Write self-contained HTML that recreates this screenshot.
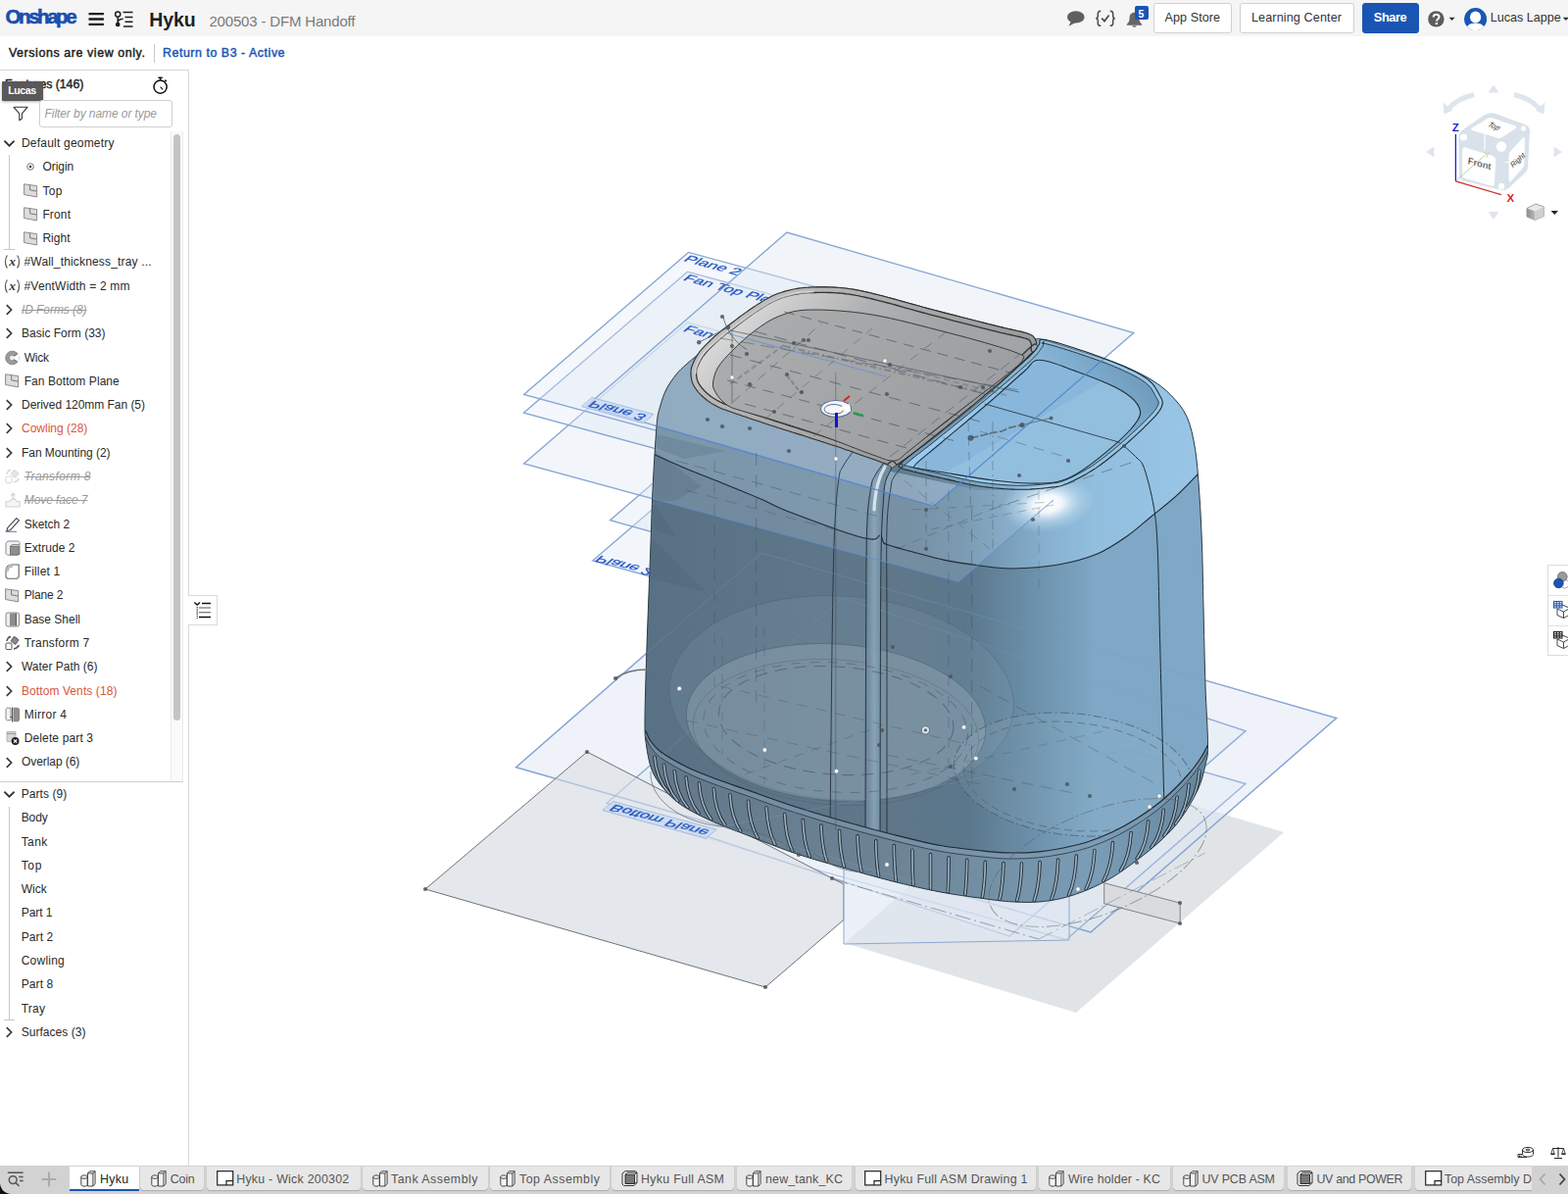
<!DOCTYPE html>
<html lang="en"><head><meta charset="utf-8"><title>Hyku | Onshape</title>
<style>
html,body{margin:0;padding:0;}
body{width:1600px;height:1218px;position:relative;overflow:hidden;background:#fff;font-family:"Liberation Sans",sans-serif;}
.t{position:absolute;line-height:20px;height:20px;white-space:nowrap;}
.abs{position:absolute;}
#hdr{position:absolute;left:0;top:0;width:1600px;height:37px;background:#f5f5f5;}
#sub{position:absolute;left:0;top:37px;width:1600px;height:34px;background:#fff;}
#panel{position:absolute;left:0;top:71px;width:192px;height:1118px;background:#fff;border-top:1px solid #d4d4d4;border-right:1px solid #d9d9d9;box-sizing:content-box;}
#tabs{position:absolute;left:0;top:1189px;width:1600px;height:29px;background:#d2d2d2;}
.btn{position:absolute;top:3px;height:31px;box-sizing:border-box;border:1px solid #d0d0d0;border-radius:3px;background:#fff;}
.tab{position:absolute;top:1190px;height:24px;background:#e7e7e7;border-radius:0 0 4px 4px;box-shadow:0 1px 1px rgba(0,0,0,0.18);}
.tab.act{background:#fff;border-radius:0;box-shadow:none;border-bottom:2px solid #1b55b3;height:23px;}
svg{position:absolute;overflow:visible;}
</style></head><body>
<div id="canvas" class="abs" style="left:193px;top:71px;width:1407px;height:1118px;background:#fff;"></div>
<svg id="model" style="left:0;top:0" width="1600" height="1218" viewBox="0 0 1600 1218">
<defs>
<linearGradient id="gbody" gradientUnits="userSpaceOnUse" x1="658" y1="0" x2="1232" y2="0">
<stop offset="0" stop-color="#587184"/><stop offset="0.3" stop-color="#5d7688"/><stop offset="0.45" stop-color="#5f7789"/>
<stop offset="0.57" stop-color="#5a778b"/><stop offset="0.68" stop-color="#6a8ea8"/><stop offset="0.80" stop-color="#7ea8c6"/><stop offset="1" stop-color="#7fa8c6"/>
</linearGradient>
<radialGradient id="ghi" gradientUnits="userSpaceOnUse" cx="0" cy="0" r="48">
<stop offset="0" stop-color="#fff" stop-opacity="1"/><stop offset="0.3" stop-color="#fff" stop-opacity="0.9"/><stop offset="0.65" stop-color="#d8ecfa" stop-opacity="0.4"/><stop offset="1" stop-color="#bfe0f5" stop-opacity="0"/>
</radialGradient>
<linearGradient id="glid" gradientUnits="userSpaceOnUse" x1="740" y1="300" x2="960" y2="480">
<stop offset="0" stop-color="#acaeb0"/><stop offset="0.5" stop-color="#a4a6a8"/><stop offset="1" stop-color="#9c9ea1"/>
</linearGradient>
<linearGradient id="grim" gradientUnits="userSpaceOnUse" x1="700" y1="300" x2="900" y2="480">
<stop offset="0" stop-color="#c9c9c9"/><stop offset="0.4" stop-color="#b4b4b4"/><stop offset="1" stop-color="#9a9c9e"/>
</linearGradient>
<linearGradient id="gbowl" gradientUnits="userSpaceOnUse" x1="730" y1="310" x2="860" y2="440">
<stop offset="0" stop-color="#e6e6e6"/><stop offset="0.25" stop-color="#cfcfcf"/><stop offset="0.6" stop-color="#b0b1b2"/><stop offset="1" stop-color="#a2a4a6"/>
</linearGradient>
<linearGradient id="gtbowl" gradientUnits="userSpaceOnUse" x1="1170" y1="380" x2="1030" y2="490">
<stop offset="0" stop-color="#6e98b8"/><stop offset="0.3" stop-color="#7fadcf"/><stop offset="0.7" stop-color="#93c4e6"/><stop offset="1" stop-color="#9acbee"/>
</linearGradient>
<linearGradient id="gchan" gradientUnits="userSpaceOnUse" x1="884" y1="0" x2="900" y2="0">
<stop offset="0" stop-color="#6a8498"/><stop offset="0.5" stop-color="#8aa5b8"/><stop offset="1" stop-color="#6f8a9e"/>
</linearGradient>
<linearGradient id="gbase" gradientUnits="userSpaceOnUse" x1="658" y1="0" x2="1232" y2="0">
<stop offset="0" stop-color="#62788a"/><stop offset="0.45" stop-color="#6d8495"/><stop offset="0.8" stop-color="#7a9db6"/><stop offset="1" stop-color="#64849b"/>
</linearGradient>
<linearGradient id="gfil" gradientUnits="userSpaceOnUse" x1="930" y1="0" x2="1230" y2="0">
<stop offset="0" stop-color="#a9d8fa" stop-opacity="0.05"/><stop offset="0.45" stop-color="#a9d8fa" stop-opacity="0.40"/><stop offset="1" stop-color="#a9d8fa" stop-opacity="0.62"/>
</linearGradient>
<clipPath id="clid"><path d="M705.0 380.0C705.0 376.2 705.8 373.8 707.5 370.0C709.2 366.2 711.2 362.1 715.0 357.5C718.8 352.9 724.6 347.3 730.0 342.5C735.4 337.7 740.8 333.8 747.5 328.8C754.2 323.8 762.9 317.1 770.0 312.5C777.1 307.9 783.3 303.9 790.0 301.0C796.7 298.1 803.3 296.3 810.0 295.0C816.7 293.7 821.3 293.2 830.0 293.0C838.7 292.8 851.2 292.8 862.0 294.0C872.8 295.2 880.0 296.8 895.0 300.5C910.0 304.2 931.4 310.6 952.0 316.0C972.6 321.4 1002.6 329.0 1018.6 333.0C1034.6 337.0 1041.8 337.9 1048.0 340.0C1054.2 342.1 1054.4 342.9 1056.0 345.5C1057.6 348.1 1058.4 352.8 1057.7 355.4C1057.0 358.0 1060.4 353.1 1052.0 361.0C1043.6 368.9 1024.2 388.4 1007.5 402.8C990.8 417.2 967.5 435.4 951.7 447.5C935.9 459.6 920.4 471.1 912.6 475.4C904.8 479.7 915.0 476.9 905.0 473.5C895.0 470.1 871.7 461.4 852.5 455.0C833.3 448.6 806.7 440.4 790.0 435.0C773.3 429.6 762.1 425.8 752.5 422.5C742.9 419.2 738.3 417.9 732.5 415.0C726.7 412.1 721.7 408.8 717.5 405.0C713.3 401.2 709.6 396.7 707.5 392.5C705.4 388.3 705.0 383.8 705.0 380.0Z"/></clipPath>
<clipPath id="cfront"><path d="M640 300L905 300L905 480L1000 500L1075 500L1075 700L640 700Z"/></clipPath>
<clipPath id="cbody"><path d="M760.0 324.0C765.8 319.2 772.9 311.9 780.0 307.5C787.1 303.1 794.2 299.9 802.5 297.5C810.8 295.1 820.1 293.6 830.0 293.0C839.9 292.4 851.2 292.8 862.0 294.0C872.8 295.2 880.0 296.8 895.0 300.5C910.0 304.2 931.4 310.6 952.0 316.0C972.6 321.4 1002.6 329.0 1018.6 333.0C1034.6 337.0 1041.8 337.9 1048.0 340.0C1054.2 342.1 1053.0 344.3 1056.0 345.5C1059.0 346.7 1055.5 344.0 1066.0 347.0C1076.5 350.0 1105.5 359.3 1119.0 363.7C1132.5 368.1 1137.7 369.5 1147.0 373.5C1156.3 377.5 1167.1 382.6 1175.0 387.5C1182.9 392.4 1188.5 396.6 1194.5 402.8C1200.5 409.1 1206.8 415.7 1211.0 425.0C1215.2 434.3 1217.5 445.6 1219.6 458.6C1221.7 471.7 1222.6 486.6 1223.8 503.3C1225.0 520.0 1225.9 539.5 1226.6 559.0C1227.3 578.5 1227.4 596.5 1228.0 620.0C1228.6 643.5 1229.2 676.7 1230.0 700.0C1230.8 723.3 1232.5 746.7 1232.5 760.0C1232.5 773.3 1231.7 772.5 1230.0 780.0C1228.3 787.5 1226.7 795.8 1222.5 805.0C1218.3 814.2 1211.2 826.3 1205.0 835.0C1198.8 843.7 1192.5 849.9 1185.0 857.0C1177.5 864.1 1168.3 871.2 1160.0 877.5C1151.7 883.8 1143.3 890.0 1135.0 895.0C1126.7 900.0 1118.3 904.0 1110.0 907.5C1101.7 911.0 1093.3 913.9 1085.0 916.0C1076.7 918.1 1068.3 919.3 1060.0 920.0C1051.7 920.7 1043.3 920.4 1035.0 920.0C1026.7 919.6 1022.5 919.2 1010.0 917.5C997.5 915.8 976.7 913.1 960.0 910.0C943.3 906.9 926.7 902.9 910.0 898.8C893.3 894.6 876.7 889.8 860.0 885.0C843.3 880.2 826.7 875.7 810.0 870.0C793.3 864.3 774.2 856.5 760.0 851.0C745.8 845.5 735.8 842.0 725.0 837.0C714.2 832.0 703.2 826.7 695.0 821.0C686.8 815.3 681.0 809.0 676.0 803.0C671.0 797.0 667.8 792.2 665.0 785.0C662.2 777.8 660.7 768.3 659.5 760.0C658.3 751.7 657.9 751.7 658.0 735.0C658.1 718.3 659.0 689.2 660.0 660.0C661.0 630.8 662.8 586.7 663.8 560.0C664.8 533.3 665.0 520.8 666.0 500.0C667.0 479.2 668.8 449.2 670.0 435.0C671.2 420.8 671.8 421.3 673.5 415.0C675.2 408.7 677.2 402.5 680.0 397.0C682.8 391.5 686.7 386.2 690.0 382.0C693.3 377.8 696.3 375.3 700.0 372.0C703.7 368.7 707.8 365.2 712.0 362.0C716.2 358.8 719.5 356.8 725.0 352.5C730.5 348.2 739.2 340.8 745.0 336.0C750.8 331.2 754.2 328.8 760.0 324.0Z"/></clipPath>
</defs>
<path d="M862.0 962.0 L1098.0 1033.0 L1310.0 849.0 L1074.0 778.0Z" fill="#e1e4e7"/>
<path d="M526.5 782.7 L777.0 564.0 L1363.7 732.5 L1113.0 951.0Z" fill="#dfe8f4" fill-opacity="0.5" stroke="#86a6d4" stroke-opacity="1" stroke-width="1.35"/>
<path d="M700.0 850.0 L1150.0 765.0 L1271.0 799.5 L1088.0 958.5Z" fill="#dfe8f4" fill-opacity="0.35" stroke="#86a6d4" stroke-opacity="0.8" stroke-width="1.35"/>
<path d="M619.0 819.4 L860.0 610.0 L1271.0 745.7 L1030.0 955.1Z" fill="#dfe8f4" fill-opacity="0.35" stroke="#86a6d4" stroke-opacity="0.8" stroke-width="1.35"/>
<path d="M434.0 907.0 L599.0 767.0 L861.0 902.0 L861.0 938.2 L781.0 1007.0Z" fill="#e2e5e9" fill-opacity="0.92" stroke="#6e7378" stroke-width="1"/>
<path d="M526.5 782.7 L777.0 564.0 L1363.7 732.5 L1113.0 951.0Z" fill="none" stroke="#86a6d4" stroke-opacity="0.55" stroke-width="1.2"/>
<path d="M619.0 819.4 L860.0 610.0 L1271.0 745.7 L1030.0 955.1Z" fill="none" stroke="#86a6d4" stroke-opacity="0.45" stroke-width="1.2"/>
<path d="M861.0 874.0 L1091.0 874.0 L1091.0 959.0 L861.0 963.0Z" fill="#dfe8f4" fill-opacity="0.6" stroke="#8fa8cc" stroke-width="1"/>
<path d="M1126.7 900.7 L1204.2 921.2 L1204.2 942.0 L1126.7 921.7Z" fill="#d9dbde" stroke="#777" stroke-width="0.9"/>
<path d="M604.7 572.0 L770.0 430.0 L1150.3 534.0 L985.0 676.0Z" fill="#dfe8f4" fill-opacity="0.4" stroke="#86a6d4" stroke-opacity="1" stroke-width="1.35"/>
<path d="M622.5 530.7 L760.0 412.0 L1122.5 513.3 L985.0 632.0Z" fill="#dfe8f4" fill-opacity="0.4" stroke="#86a6d4" stroke-opacity="1" stroke-width="1.35"/>
<path d="M534.5 473.0 L701.5 329.0 L1145.0 449.5 L978.0 593.5Z" fill="#dfe8f4" fill-opacity="0.4" stroke="#86a6d4" stroke-opacity="1" stroke-width="1.35"/>
<path d="M534.5 421.1 L701.5 277.2 L1145.0 397.8 L978.0 541.7Z" fill="#dfe8f4" fill-opacity="0.35" stroke="#86a6d4" stroke-opacity="1" stroke-width="1.35"/>
<path d="M534.5 402.5 L702.5 257.4 L1146.0 377.9 L978.0 523.0Z" fill="#dfe8f4" fill-opacity="0.35" stroke="#86a6d4" stroke-opacity="1" stroke-width="1.35"/>
<path d="M598.8 414.0 L802.9 237.1 L1156.8 339.5 L952.7 516.4Z" fill="#dfe8f4" fill-opacity="0.45" stroke="#86a6d4" stroke-opacity="1" stroke-width="1.35"/>
<g transform="matrix(1.256 0.341 -0.757 0.653 696.5 266.0)"><text x="0" y="0" font-family="Liberation Sans,sans-serif" font-size="13" fill="#2457c5" stroke="#2457c5" stroke-width="0.25">Plane 2</text></g>
<g transform="matrix(1.256 0.341 -0.757 0.653 696.0 285.5)"><text x="0" y="0" font-family="Liberation Sans,sans-serif" font-size="13" fill="#2457c5" stroke="#2457c5" stroke-width="0.25">Fan Top Plane</text></g>
<g transform="matrix(1.256 0.341 -0.757 0.653 696.0 337.5)"><text x="0" y="0" font-family="Liberation Sans,sans-serif" font-size="13" fill="#2457c5" stroke="#2457c5" stroke-width="0.25">Fan Bottom Plane</text></g>
<g transform="matrix(1.256 0.341 0.757 -0.653 605.5 408.5)"><rect x="-3" y="-11" width="50.1" height="14" fill="#c9d9f2" fill-opacity="0.75" stroke="#8fb0e0" stroke-width="0.6"/><text x="0" y="0" font-family="Liberation Sans,sans-serif" font-size="13" fill="#2457c5" stroke="#2457c5" stroke-width="0.25">Plane 3</text></g>
<g transform="matrix(1.256 0.341 0.757 -0.653 612.5 566.5)"><text x="0" y="0" font-family="Liberation Sans,sans-serif" font-size="13" fill="#2457c5" stroke="#2457c5" stroke-width="0.25">Plane 2</text></g>
<g transform="matrix(1.256 0.341 0.757 -0.653 627.0 820.5)"><rect x="-3" y="-11" width="84.0" height="14" fill="#c9d9f2" fill-opacity="0.75" stroke="#8fb0e0" stroke-width="0.6"/><text x="0" y="0" font-family="Liberation Sans,sans-serif" font-size="13" fill="#2457c5" stroke="#2457c5" stroke-width="0.25">Bottom Plane</text></g>
<path d="M760.0 324.0C765.8 319.2 772.9 311.9 780.0 307.5C787.1 303.1 794.2 299.9 802.5 297.5C810.8 295.1 820.1 293.6 830.0 293.0C839.9 292.4 851.2 292.8 862.0 294.0C872.8 295.2 880.0 296.8 895.0 300.5C910.0 304.2 931.4 310.6 952.0 316.0C972.6 321.4 1002.6 329.0 1018.6 333.0C1034.6 337.0 1041.8 337.9 1048.0 340.0C1054.2 342.1 1053.0 344.3 1056.0 345.5C1059.0 346.7 1055.5 344.0 1066.0 347.0C1076.5 350.0 1105.5 359.3 1119.0 363.7C1132.5 368.1 1137.7 369.5 1147.0 373.5C1156.3 377.5 1167.1 382.6 1175.0 387.5C1182.9 392.4 1188.5 396.6 1194.5 402.8C1200.5 409.1 1206.8 415.7 1211.0 425.0C1215.2 434.3 1217.5 445.6 1219.6 458.6C1221.7 471.7 1222.6 486.6 1223.8 503.3C1225.0 520.0 1225.9 539.5 1226.6 559.0C1227.3 578.5 1227.4 596.5 1228.0 620.0C1228.6 643.5 1229.2 676.7 1230.0 700.0C1230.8 723.3 1232.5 746.7 1232.5 760.0C1232.5 773.3 1231.7 772.5 1230.0 780.0C1228.3 787.5 1226.7 795.8 1222.5 805.0C1218.3 814.2 1211.2 826.3 1205.0 835.0C1198.8 843.7 1192.5 849.9 1185.0 857.0C1177.5 864.1 1168.3 871.2 1160.0 877.5C1151.7 883.8 1143.3 890.0 1135.0 895.0C1126.7 900.0 1118.3 904.0 1110.0 907.5C1101.7 911.0 1093.3 913.9 1085.0 916.0C1076.7 918.1 1068.3 919.3 1060.0 920.0C1051.7 920.7 1043.3 920.4 1035.0 920.0C1026.7 919.6 1022.5 919.2 1010.0 917.5C997.5 915.8 976.7 913.1 960.0 910.0C943.3 906.9 926.7 902.9 910.0 898.8C893.3 894.6 876.7 889.8 860.0 885.0C843.3 880.2 826.7 875.7 810.0 870.0C793.3 864.3 774.2 856.5 760.0 851.0C745.8 845.5 735.8 842.0 725.0 837.0C714.2 832.0 703.2 826.7 695.0 821.0C686.8 815.3 681.0 809.0 676.0 803.0C671.0 797.0 667.8 792.2 665.0 785.0C662.2 777.8 660.7 768.3 659.5 760.0C658.3 751.7 657.9 751.7 658.0 735.0C658.1 718.3 659.0 689.2 660.0 660.0C661.0 630.8 662.8 586.7 663.8 560.0C664.8 533.3 665.0 520.8 666.0 500.0C667.0 479.2 668.8 449.2 670.0 435.0C671.2 420.8 671.8 421.3 673.5 415.0C675.2 408.7 677.2 402.5 680.0 397.0C682.8 391.5 686.7 386.2 690.0 382.0C693.3 377.8 696.3 375.3 700.0 372.0C703.7 368.7 707.8 365.2 712.0 362.0C716.2 358.8 719.5 356.8 725.0 352.5C730.5 348.2 739.2 340.8 745.0 336.0C750.8 331.2 754.2 328.8 760.0 324.0Z" fill="url(#gbody)"/>
<g clip-path="url(#cbody)">
<path d="M534.5 473.0 L701.5 329.0 L1145.0 449.5 L978.0 593.5Z" fill="#cfe6ff" fill-opacity="0.2" clip-path="url(#cfront)"/>
<path d="M598.8 414.0 L802.9 237.1 L1156.8 339.5 L952.7 516.4Z" fill="#cfe6ff" fill-opacity="0.27" clip-path="url(#cfront)"/>
<path d="M664.0 462.0C670.0 464.7 687.3 472.7 700.0 478.0C712.7 483.3 727.0 488.7 740.0 494.0C753.0 499.3 768.0 505.4 778.0 509.7C788.0 514.0 788.1 515.2 800.0 520.0C811.9 524.8 837.0 534.0 849.3 538.5C861.6 543.0 867.3 544.8 873.9 546.7C880.5 548.6 885.4 549.5 888.7 550.0C892.1 550.5 892.5 550.2 894.0 549.5C895.5 548.8 896.9 546.6 897.5 546.0L905 475L905 300L640 300L640 462Z" fill="#bcd9f0" fill-opacity="0.16"/>
<path d="M899.3 546.0C899.6 547.0 900.0 550.4 901.0 552.0C902.0 553.6 899.9 553.7 905.0 555.5C910.1 557.3 921.6 560.4 931.4 563.0C941.2 565.6 952.6 569.1 964.0 571.4C975.4 573.7 988.3 575.6 1000.0 577.0C1011.7 578.4 1020.7 580.2 1034.0 580.0C1047.3 579.8 1065.7 578.5 1080.0 576.0C1094.3 573.5 1108.0 569.8 1119.7 565.0C1131.4 560.2 1140.8 553.4 1150.0 547.0C1159.2 540.6 1166.5 533.6 1175.0 526.7C1183.5 519.8 1193.0 512.5 1200.8 505.4C1208.6 498.3 1218.5 487.6 1222.0 484.0L1240 484L1240 330L1050 330L905 475Z" fill="url(#gfil)"/>
<g transform="translate(1069,514) rotate(-8) scale(1.0,0.6)"><circle cx="0" cy="0" r="48" fill="url(#ghi)"/></g>
</g>
<g clip-path="url(#cbody)">
<path d="M669.9 443.0 L741.0 460.0 L697.5 468.0 L669.9 456.8Z" fill="#40596c" fill-opacity="0.2"/>
<path d="M668.7 460.0 L715.9 495.9 L688.3 510.8 L667.0 512.0Z" fill="#40596c" fill-opacity="0.2"/>
<path d="M667.0 514.0 L691.7 548.7 L667.0 539.5Z" fill="#40596c" fill-opacity="0.2"/>
<path d="M665.3 548.7 L720.5 604.0 L664.0 590.0Z" fill="#40596c" fill-opacity="0.2"/>
<g transform="rotate(4 858 722)"><ellipse cx="858" cy="712" rx="176" ry="104" fill="#8fa6b8" fill-opacity="0.16" stroke="#4e6272" stroke-opacity="0.5" stroke-width="0.8"/></g>
<g transform="rotate(4 853 737)"><ellipse cx="853" cy="737" rx="153" ry="80" fill="#a9bac6" fill-opacity="0.30" stroke="#4a5d6b" stroke-opacity="0.6" stroke-width="0.9"/></g>
<g transform="rotate(4 853 745)"><ellipse cx="853" cy="747" rx="146" ry="74" fill="none" stroke="#4a5d6b" stroke-opacity="0.45" stroke-width="0.8"/></g>
<g transform="rotate(6 1095 790)"><ellipse cx="1095" cy="790" rx="122" ry="62" fill="#b5cbdc" fill-opacity="0.10" stroke="#46586a" stroke-opacity="0.7" stroke-width="1" stroke-dasharray="9 3 2 3"/></g>
<g transform="rotate(6 1095 790)"><ellipse cx="1095" cy="792" rx="112" ry="55" fill="none" stroke="#46586a" stroke-opacity="0.6" stroke-width="0.9" stroke-dasharray="8 5"/></g>
<path d="M901.8 472.0C900.3 474.2 895.2 480.8 893.0 485.0C890.8 489.2 890.1 488.6 888.7 497.5C887.3 506.4 885.4 514.8 884.6 538.5C883.8 562.2 884.0 586.4 883.7 640.0C883.4 693.6 883.1 823.3 883.0 860.0L898 865L898.5 640.0L899.3 555.0L901.8 505.7L904.0 490.0L911.7 474.5Z" fill="url(#gchan)" fill-opacity="0.9"/>
<path d="M903 476C897 486 893 498 892 520" fill="none" stroke="#e4eef5" stroke-width="3.2" stroke-linecap="round" stroke-opacity="0.85"/>
<path d="M870.6 460.5C868.8 463.1 862.5 471.2 860.0 476.0C857.5 480.8 857.2 478.6 855.8 489.0C854.4 499.4 852.8 513.3 851.7 538.5C850.6 563.7 850.1 588.1 849.3 640.0C848.5 691.9 847.4 815.0 847.0 850.0" fill="none" stroke="#1e2a33" stroke-opacity="0.85" stroke-width="1"/>
<path d="M901.8 472.0C900.3 474.2 895.2 480.8 893.0 485.0C890.8 489.2 890.1 488.6 888.7 497.5C887.3 506.4 885.4 514.8 884.6 538.5C883.8 562.2 884.0 586.4 883.7 640.0C883.4 693.6 883.1 823.3 883.0 860.0" fill="none" stroke="#1e2a33" stroke-opacity="0.9" stroke-width="1"/>
<path d="M911.7 474.5C910.4 477.1 905.6 484.8 904.0 490.0C902.4 495.2 902.6 494.9 901.8 505.7C901.0 516.5 899.8 532.6 899.3 555.0C898.8 577.4 898.7 588.3 898.5 640.0C898.3 691.7 898.1 827.5 898.0 865.0" fill="none" stroke="#1e2a33" stroke-opacity="0.9" stroke-width="1"/>
<path d="M921.5 474.5C919.9 476.6 914.1 483.2 912.0 487.0C909.9 490.8 910.2 488.9 909.0 497.5C907.8 506.1 905.7 514.8 905.0 538.5C904.3 562.2 905.0 585.1 905.0 640.0C905.0 694.9 905.0 830.0 905.0 868.0" fill="none" stroke="#1e2a33" stroke-opacity="0.85" stroke-width="1"/>
<path d="M664.0 462.0C670.0 464.7 687.3 472.7 700.0 478.0C712.7 483.3 727.0 488.7 740.0 494.0C753.0 499.3 768.0 505.4 778.0 509.7C788.0 514.0 788.1 515.2 800.0 520.0C811.9 524.8 837.0 534.0 849.3 538.5C861.6 543.0 867.3 544.8 873.9 546.7C880.5 548.6 885.4 549.5 888.7 550.0C892.1 550.5 892.5 550.2 894.0 549.5C895.5 548.8 896.9 546.6 897.5 546.0" fill="none" stroke="#1e2a33" stroke-width="1.1"/>
<path d="M899.3 546.0C899.6 547.0 900.0 550.4 901.0 552.0C902.0 553.6 899.9 553.7 905.0 555.5C910.1 557.3 921.6 560.4 931.4 563.0C941.2 565.6 952.6 569.1 964.0 571.4C975.4 573.7 988.3 575.6 1000.0 577.0C1011.7 578.4 1020.7 580.2 1034.0 580.0C1047.3 579.8 1065.7 578.5 1080.0 576.0C1094.3 573.5 1108.0 569.8 1119.7 565.0C1131.4 560.2 1140.8 553.4 1150.0 547.0C1159.2 540.6 1166.5 533.6 1175.0 526.7C1183.5 519.8 1193.0 512.5 1200.8 505.4C1208.6 498.3 1218.5 487.6 1222.0 484.0" fill="none" stroke="#1e2a33" stroke-width="1.1"/>
<path d="M1145.8 454.0C1148.2 456.2 1156.4 463.1 1160.0 467.0C1163.6 470.9 1164.6 469.3 1167.5 477.6C1170.4 485.9 1175.0 503.3 1177.3 517.0C1179.6 530.7 1180.1 536.2 1181.2 560.0C1182.3 583.8 1182.7 619.2 1183.8 660.0C1184.8 700.8 1186.8 779.2 1187.5 805.0C1188.2 830.8 1187.9 813.3 1188.0 815.0" fill="none" stroke="#1e2a33" stroke-width="1"/>
</g>
<g clip-path="url(#cbody)">
<path d="M658.5 745.0C659.4 746.8 661.2 752.2 664.0 756.0C666.8 759.8 669.0 763.2 675.0 767.5C681.0 771.8 691.7 777.8 700.0 782.0C708.3 786.2 715.0 788.7 725.0 792.5C735.0 796.3 745.8 800.0 760.0 805.0C774.2 810.0 793.3 817.1 810.0 822.5C826.7 827.9 843.3 832.8 860.0 837.5C876.7 842.2 893.3 846.8 910.0 851.0C926.7 855.2 943.3 859.5 960.0 862.5C976.7 865.5 997.5 867.5 1010.0 868.8C1022.5 870.0 1026.7 870.0 1035.0 870.0C1043.3 870.0 1051.7 869.6 1060.0 868.8C1068.3 867.9 1076.7 866.7 1085.0 865.0C1093.3 863.3 1101.7 861.5 1110.0 858.8C1118.3 856.0 1126.7 852.7 1135.0 848.8C1143.3 844.8 1151.2 840.6 1160.0 835.0C1168.8 829.4 1178.8 822.5 1187.5 815.0C1196.2 807.5 1206.1 797.2 1212.5 790.0C1218.9 782.8 1222.7 777.0 1226.0 772.0C1229.3 767.0 1231.4 762.0 1232.5 760.0L1240 760L1240 940L650 940L650 745Z" fill="url(#gbase)"/>
<path d="M658.5 745.0C659.4 746.8 661.2 752.2 664.0 756.0C666.8 759.8 669.0 763.2 675.0 767.5C681.0 771.8 691.7 777.8 700.0 782.0C708.3 786.2 715.0 788.7 725.0 792.5C735.0 796.3 745.8 800.0 760.0 805.0C774.2 810.0 793.3 817.1 810.0 822.5C826.7 827.9 843.3 832.8 860.0 837.5C876.7 842.2 893.3 846.8 910.0 851.0C926.7 855.2 943.3 859.5 960.0 862.5C976.7 865.5 997.5 867.5 1010.0 868.8C1022.5 870.0 1026.7 870.0 1035.0 870.0C1043.3 870.0 1051.7 869.6 1060.0 868.8C1068.3 867.9 1076.7 866.7 1085.0 865.0C1093.3 863.3 1101.7 861.5 1110.0 858.8C1118.3 856.0 1126.7 852.7 1135.0 848.8C1143.3 844.8 1151.2 840.6 1160.0 835.0C1168.8 829.4 1178.8 822.5 1187.5 815.0C1196.2 807.5 1206.1 797.2 1212.5 790.0C1218.9 782.8 1222.7 777.0 1226.0 772.0C1229.3 767.0 1231.4 762.0 1232.5 760.0L1232.5 766.0L1232.2 766.6L1231.9 767.2L1231.5 768.0L1231.1 768.9L1230.6 769.8L1230.1 770.9L1229.5 772.0L1228.9 773.1L1228.3 774.3L1227.6 775.5L1226.8 776.8L1226.0 778.0L1225.2 779.3L1224.3 780.6L1223.4 781.9L1222.4 783.3L1221.5 784.7L1220.4 786.2L1219.3 787.7L1218.1 789.3L1216.8 790.9L1215.5 792.5L1214.0 794.2L1212.5 796.0L1210.8 797.9L1209.0 799.8L1207.1 801.9L1205.1 804.0L1203.0 806.2L1200.9 808.4L1198.7 810.6L1196.4 812.8L1194.2 814.9L1191.9 817.0L1189.7 819.1L1187.5 821.0L1185.3 822.9L1183.0 824.7L1180.7 826.5L1178.4 828.3L1176.1 830.0L1173.8 831.7L1171.4 833.4L1169.1 835.0L1166.8 836.6L1164.5 838.1L1162.2 839.6L1160.0 841.0L1157.8 842.4L1155.7 843.7L1153.6 845.0L1151.5 846.2L1149.4 847.4L1147.3 848.5L1145.3 849.6L1143.2 850.7L1141.2 851.7L1139.1 852.7L1137.1 853.8L1135.0 854.8L1132.9 855.7L1130.8 856.7L1128.8 857.6L1126.7 858.5L1124.6 859.4L1122.5 860.2L1120.4 861.0L1118.3 861.8L1116.2 862.6L1114.2 863.3L1112.1 864.1L1110.0 864.8L1107.9 865.4L1105.8 866.0L1103.8 866.6L1101.7 867.2L1099.6 867.7L1097.5 868.3L1095.4 868.8L1093.3 869.2L1091.2 869.7L1089.2 870.1L1087.1 870.6L1085.0 871.0L1082.9 871.4L1080.8 871.8L1078.8 872.2L1076.7 872.5L1074.6 872.9L1072.5 873.2L1070.4 873.5L1068.3 873.8L1066.2 874.0L1064.2 874.3L1062.1 874.5L1060.0 874.8L1057.9 874.9L1055.8 875.1L1053.8 875.3L1051.7 875.4L1049.6 875.6L1047.5 875.7L1045.4 875.8L1043.3 875.9L1041.2 875.9L1039.2 876.0L1037.1 876.0L1035.0 876.0L1033.0 876.0L1031.1 876.0L1029.3 876.0L1027.6 876.0L1025.8 875.9L1024.1 875.8L1022.2 875.8L1020.2 875.6L1018.0 875.5L1015.6 875.3L1013.0 875.0L1010.0 874.8L1006.7 874.4L1003.1 874.1L999.3 873.7L995.2 873.2L990.9 872.8L986.6 872.3L982.1 871.7L977.6 871.2L973.1 870.5L968.6 869.9L964.2 869.2L960.0 868.5L955.8 867.7L951.7 866.9L947.5 866.0L943.3 865.1L939.2 864.2L935.0 863.2L930.8 862.2L926.7 861.2L922.5 860.1L918.3 859.1L914.2 858.0L910.0 857.0L905.8 855.9L901.7 854.9L897.5 853.8L893.3 852.7L889.2 851.6L885.0 850.5L880.8 849.3L876.7 848.2L872.5 847.0L868.3 845.9L864.2 844.7L860.0 843.5L855.8 842.3L851.7 841.1L847.5 839.9L843.3 838.7L839.2 837.5L835.0 836.2L830.8 835.0L826.7 833.7L822.5 832.5L818.3 831.2L814.2 829.8L810.0 828.5L805.8 827.1L801.5 825.7L797.1 824.2L792.8 822.7L788.4 821.1L784.1 819.6L779.8 818.1L775.6 816.6L771.4 815.1L767.5 813.7L763.6 812.3L760.0 811.0L756.5 809.8L753.2 808.6L750.0 807.5L746.9 806.4L743.8 805.3L740.9 804.3L738.1 803.3L735.4 802.3L732.7 801.4L730.1 800.4L727.5 799.5L725.0 798.5L722.6 797.6L720.3 796.7L718.0 795.8L715.9 795.0L713.9 794.2L711.9 793.4L709.9 792.6L708.0 791.7L706.0 790.9L704.1 790.0L702.1 789.0L700.0 788.0L697.9 786.9L695.7 785.8L693.4 784.6L691.1 783.4L688.9 782.1L686.6 780.8L684.4 779.5L682.3 778.3L680.3 777.0L678.4 775.8L676.6 774.6L675.0 773.5L673.6 772.4L672.3 771.4L671.1 770.4L670.1 769.4L669.1 768.5L668.3 767.5L667.5 766.6L666.7 765.7L666.0 764.8L665.4 763.9L664.7 762.9L664.0 762.0L663.3 761.0L662.7 760.0L662.1 759.0L661.6 757.9L661.0 756.8L660.6 755.8L660.1 754.8L659.7 753.8L659.4 753.0L659.0 752.2L658.7 751.5L658.5 751.0Z" fill="#7f9bb0" fill-opacity="0.55"/>
<path d="M658.5 751.0C659.4 752.8 661.2 758.2 664.0 762.0C666.8 765.8 669.0 769.2 675.0 773.5C681.0 777.8 691.7 783.8 700.0 788.0C708.3 792.2 715.0 794.7 725.0 798.5C735.0 802.3 745.8 806.0 760.0 811.0C774.2 816.0 793.3 823.1 810.0 828.5C826.7 833.9 843.3 838.8 860.0 843.5C876.7 848.2 893.3 852.8 910.0 857.0C926.7 861.2 943.3 865.5 960.0 868.5C976.7 871.5 997.5 873.5 1010.0 874.8C1022.5 876.0 1026.7 876.0 1035.0 876.0C1043.3 876.0 1051.7 875.6 1060.0 874.8C1068.3 873.9 1076.7 872.7 1085.0 871.0C1093.3 869.3 1101.7 867.5 1110.0 864.8C1118.3 862.0 1126.7 858.7 1135.0 854.8C1143.3 850.8 1151.2 846.6 1160.0 841.0C1168.8 835.4 1178.8 828.5 1187.5 821.0C1196.2 813.5 1206.1 803.2 1212.5 796.0C1218.9 788.8 1222.7 783.0 1226.0 778.0C1229.3 773.0 1231.4 768.0 1232.5 766.0" fill="none" stroke="#1f2a32" stroke-opacity="0.8" stroke-width="0.9"/>
<path d="M668.0 772.2Q669.8 795.0 682.7 809.0M677.5 780.2Q679.2 803.1 691.7 817.1M688.2 786.7Q689.8 809.7 701.8 823.8M700.1 793.0Q701.7 815.8 713.1 829.8M713.4 799.0Q714.9 821.8 725.7 835.8M728.3 804.7Q729.7 827.7 739.8 841.7M744.9 810.7Q746.2 833.7 755.6 847.8M763.5 817.2Q764.7 840.5 773.2 854.7M782.1 823.9Q783.2 847.2 790.8 861.5M800.7 830.4Q801.6 853.7 808.5 868.0M819.3 836.5Q820.1 859.5 826.1 873.7M837.9 842.1Q838.6 864.9 843.7 878.9M856.5 847.5Q857.1 870.1 861.4 883.9M875.1 852.8Q875.6 875.2 879.0 888.9M893.7 857.8Q894.1 880.1 896.6 893.8M912.3 862.6Q912.5 884.7 914.3 898.3M930.9 867.2Q931.0 889.1 931.9 902.5M949.5 871.5Q949.5 893.1 949.5 906.4M968.1 874.8Q968.0 896.5 967.2 909.8M986.7 877.3Q986.5 899.1 984.8 912.5M1005.3 879.3Q1005.0 901.4 1002.4 915.0M1023.9 880.8Q1023.4 903.4 1020.1 917.3M1042.5 880.9Q1041.9 904.3 1037.7 918.6M1061.1 879.6Q1060.4 903.9 1055.3 918.8M1079.7 877.0Q1078.9 901.8 1073.0 917.0M1098.3 873.1Q1097.4 897.8 1090.6 913.0M1116.9 867.4Q1115.9 891.8 1108.2 906.7M1135.5 859.5Q1134.3 883.7 1125.9 898.6M1154.1 849.6Q1152.8 873.5 1143.5 888.0M1171.7 838.1Q1170.4 861.5 1160.2 875.8M1187.3 826.2Q1185.8 849.8 1175.0 864.3M1201.1 813.2Q1199.5 837.7 1188.0 852.6M1213.2 800.2Q1211.5 825.2 1199.5 840.6M1223.9 786.2Q1222.1 811.3 1209.6 826.7" fill="none" stroke="#202c36" stroke-width="3.5" stroke-linecap="round"/>
<path d="M668.0 772.2Q669.8 795.0 682.7 809.0M677.5 780.2Q679.2 803.1 691.7 817.1M688.2 786.7Q689.8 809.7 701.8 823.8M700.1 793.0Q701.7 815.8 713.1 829.8M713.4 799.0Q714.9 821.8 725.7 835.8M728.3 804.7Q729.7 827.7 739.8 841.7M744.9 810.7Q746.2 833.7 755.6 847.8M763.5 817.2Q764.7 840.5 773.2 854.7M782.1 823.9Q783.2 847.2 790.8 861.5M800.7 830.4Q801.6 853.7 808.5 868.0M819.3 836.5Q820.1 859.5 826.1 873.7M837.9 842.1Q838.6 864.9 843.7 878.9M856.5 847.5Q857.1 870.1 861.4 883.9M875.1 852.8Q875.6 875.2 879.0 888.9M893.7 857.8Q894.1 880.1 896.6 893.8M912.3 862.6Q912.5 884.7 914.3 898.3M930.9 867.2Q931.0 889.1 931.9 902.5M949.5 871.5Q949.5 893.1 949.5 906.4M968.1 874.8Q968.0 896.5 967.2 909.8M986.7 877.3Q986.5 899.1 984.8 912.5M1005.3 879.3Q1005.0 901.4 1002.4 915.0M1023.9 880.8Q1023.4 903.4 1020.1 917.3M1042.5 880.9Q1041.9 904.3 1037.7 918.6M1061.1 879.6Q1060.4 903.9 1055.3 918.8M1079.7 877.0Q1078.9 901.8 1073.0 917.0M1098.3 873.1Q1097.4 897.8 1090.6 913.0M1116.9 867.4Q1115.9 891.8 1108.2 906.7M1135.5 859.5Q1134.3 883.7 1125.9 898.6M1154.1 849.6Q1152.8 873.5 1143.5 888.0M1171.7 838.1Q1170.4 861.5 1160.2 875.8M1187.3 826.2Q1185.8 849.8 1175.0 864.3M1201.1 813.2Q1199.5 837.7 1188.0 852.6M1213.2 800.2Q1211.5 825.2 1199.5 840.6M1223.9 786.2Q1222.1 811.3 1209.6 826.7" fill="none" stroke="#9bb0bf" stroke-width="1.7" stroke-linecap="round"/>
</g>
<path d="M760.0 324.0C765.8 319.2 772.9 311.9 780.0 307.5C787.1 303.1 794.2 299.9 802.5 297.5C810.8 295.1 820.1 293.6 830.0 293.0C839.9 292.4 851.2 292.8 862.0 294.0C872.8 295.2 880.0 296.8 895.0 300.5C910.0 304.2 931.4 310.6 952.0 316.0C972.6 321.4 1002.6 329.0 1018.6 333.0C1034.6 337.0 1041.8 337.9 1048.0 340.0C1054.2 342.1 1053.0 344.3 1056.0 345.5C1059.0 346.7 1055.5 344.0 1066.0 347.0C1076.5 350.0 1105.5 359.3 1119.0 363.7C1132.5 368.1 1137.7 369.5 1147.0 373.5C1156.3 377.5 1167.1 382.6 1175.0 387.5C1182.9 392.4 1188.5 396.6 1194.5 402.8C1200.5 409.1 1206.8 415.7 1211.0 425.0C1215.2 434.3 1217.5 445.6 1219.6 458.6C1221.7 471.7 1222.6 486.6 1223.8 503.3C1225.0 520.0 1225.9 539.5 1226.6 559.0C1227.3 578.5 1227.4 596.5 1228.0 620.0C1228.6 643.5 1229.2 676.7 1230.0 700.0C1230.8 723.3 1232.5 746.7 1232.5 760.0C1232.5 773.3 1231.7 772.5 1230.0 780.0C1228.3 787.5 1226.7 795.8 1222.5 805.0C1218.3 814.2 1211.2 826.3 1205.0 835.0C1198.8 843.7 1192.5 849.9 1185.0 857.0C1177.5 864.1 1168.3 871.2 1160.0 877.5C1151.7 883.8 1143.3 890.0 1135.0 895.0C1126.7 900.0 1118.3 904.0 1110.0 907.5C1101.7 911.0 1093.3 913.9 1085.0 916.0C1076.7 918.1 1068.3 919.3 1060.0 920.0C1051.7 920.7 1043.3 920.4 1035.0 920.0C1026.7 919.6 1022.5 919.2 1010.0 917.5C997.5 915.8 976.7 913.1 960.0 910.0C943.3 906.9 926.7 902.9 910.0 898.8C893.3 894.6 876.7 889.8 860.0 885.0C843.3 880.2 826.7 875.7 810.0 870.0C793.3 864.3 774.2 856.5 760.0 851.0C745.8 845.5 735.8 842.0 725.0 837.0C714.2 832.0 703.2 826.7 695.0 821.0C686.8 815.3 681.0 809.0 676.0 803.0C671.0 797.0 667.8 792.2 665.0 785.0C662.2 777.8 660.7 768.3 659.5 760.0C658.3 751.7 657.9 751.7 658.0 735.0C658.1 718.3 659.0 689.2 660.0 660.0C661.0 630.8 662.8 586.7 663.8 560.0C664.8 533.3 665.0 520.8 666.0 500.0C667.0 479.2 668.8 449.2 670.0 435.0C671.2 420.8 671.8 421.3 673.5 415.0C675.2 408.7 677.2 402.5 680.0 397.0C682.8 391.5 686.7 386.2 690.0 382.0C693.3 377.8 696.3 375.3 700.0 372.0C703.7 368.7 707.8 365.2 712.0 362.0C716.2 358.8 719.5 356.8 725.0 352.5C730.5 348.2 739.2 340.8 745.0 336.0C750.8 331.2 754.2 328.8 760.0 324.0Z" fill="none" stroke="#2c3a44" stroke-width="1"/>
<path d="M658.5 745.0C659.4 746.8 661.2 752.2 664.0 756.0C666.8 759.8 669.0 763.2 675.0 767.5C681.0 771.8 691.7 777.8 700.0 782.0C708.3 786.2 715.0 788.7 725.0 792.5C735.0 796.3 745.8 800.0 760.0 805.0C774.2 810.0 793.3 817.1 810.0 822.5C826.7 827.9 843.3 832.8 860.0 837.5C876.7 842.2 893.3 846.8 910.0 851.0C926.7 855.2 943.3 859.5 960.0 862.5C976.7 865.5 997.5 867.5 1010.0 868.8C1022.5 870.0 1026.7 870.0 1035.0 870.0C1043.3 870.0 1051.7 869.6 1060.0 868.8C1068.3 867.9 1076.7 866.7 1085.0 865.0C1093.3 863.3 1101.7 861.5 1110.0 858.8C1118.3 856.0 1126.7 852.7 1135.0 848.8C1143.3 844.8 1151.2 840.6 1160.0 835.0C1168.8 829.4 1178.8 822.5 1187.5 815.0C1196.2 807.5 1206.1 797.2 1212.5 790.0C1218.9 782.8 1222.7 777.0 1226.0 772.0C1229.3 767.0 1231.4 762.0 1232.5 760.0" fill="none" stroke="#1f2a32" stroke-width="1.2"/>
<path d="M705.0 380.0L705.0 379.1L705.1 378.2L705.2 377.4L705.3 376.6L705.4 375.8L705.6 375.0L705.9 374.2L706.1 373.4L706.4 372.6L706.7 371.8L707.1 370.9L707.5 370.0L707.9 369.1L708.4 368.1L708.8 367.1L709.4 366.1L709.9 365.1L710.5 364.1L711.1 363.0L711.8 361.9L712.5 360.9L713.3 359.8L714.1 358.6L715.0 357.5L716.0 356.3L717.0 355.1L718.2 353.9L719.4 352.6L720.6 351.4L721.9 350.1L723.2 348.8L724.5 347.5L725.9 346.2L727.3 345.0L728.6 343.7L730.0 342.5L731.4 341.3L732.7 340.2L734.1 339.0L735.5 337.9L736.9 336.8L738.3 335.7L739.7 334.6L741.2 333.5L742.7 332.3L744.3 331.2L745.9 330.0L747.5 328.8L749.2 327.5L751.0 326.1L752.8 324.8L754.7 323.3L756.6 321.9L758.6 320.5L760.5 319.1L762.5 317.7L764.4 316.3L766.3 315.0L768.2 313.7L770.0 312.5L771.8 311.4L773.5 310.2L775.2 309.2L776.9 308.1L778.5 307.1L780.2 306.1L781.8 305.2L783.4 304.2L785.1 303.4L786.7 302.5L788.3 301.8L790.0 301.0L791.7 300.3L793.3 299.6L795.0 299.0L796.7 298.4L798.3 297.9L800.0 297.4L801.7 296.9L803.3 296.5L805.0 296.1L806.7 295.7L808.3 295.3L810.0 295.0L811.6 294.7L813.2 294.4L814.7 294.1L816.2 293.9L817.7 293.7L819.2 293.6L820.8 293.4L822.4 293.3L824.2 293.2L826.0 293.1L827.9 293.0L830.0 293.0L832.2 293.0L834.6 292.9L837.1 292.9L839.7 292.9L842.4 292.9L845.2 293.0L848.0 293.0L850.8 293.1L853.6 293.3L856.5 293.5L859.3 293.7L862.0 294.0L864.6 294.3L867.2 294.7L869.6 295.0L872.0 295.4L874.5 295.9L876.9 296.3L879.5 296.9L882.2 297.5L885.0 298.1L888.1 298.8L891.4 299.6L895.0 300.5L898.9 301.5L903.0 302.5L907.3 303.7L911.9 304.9L916.6 306.2L921.4 307.6L926.4 309.0L931.4 310.4L936.5 311.8L941.7 313.2L946.8 314.6L952.0 316.0L957.3 317.4L963.0 318.9L968.8 320.4L974.9 321.9L981.0 323.5L987.0 325.0L993.0 326.5L998.8 328.0L1004.3 329.4L1009.5 330.7L1014.3 331.9L1018.6 333.0L1022.4 333.9L1025.9 334.8L1029.1 335.5L1031.9 336.1L1034.6 336.7L1037.0 337.2L1039.2 337.7L1041.2 338.1L1043.0 338.6L1044.8 339.0L1046.4 339.5L1048.0 340.0L1049.4 340.5L1050.6 341.0L1051.7 341.4L1052.5 341.8L1053.2 342.2L1053.7 342.6L1054.2 343.0L1054.6 343.4L1054.9 343.9L1055.3 344.3L1055.6 344.9L1056.0 345.5L1056.4 346.2L1056.7 346.9L1057.0 347.8L1057.3 348.6L1057.5 349.5L1057.7 350.4L1057.8 351.4L1057.9 352.3L1057.9 353.1L1057.9 353.9L1057.8 354.7L1057.7 355.4L1057.6 355.9L1057.6 356.2L1057.7 356.3L1057.8 356.2L1057.8 356.2L1057.7 356.2L1057.5 356.3L1057.0 356.6L1056.3 357.2L1055.3 358.0L1053.9 359.3L1052.0 361.0L1049.7 363.2L1047.0 365.8L1043.9 368.8L1040.5 372.1L1036.8 375.7L1032.9 379.5L1028.8 383.3L1024.6 387.3L1020.3 391.3L1016.0 395.2L1011.7 399.1L1007.5 402.8L1003.2 406.5L998.7 410.3L994.0 414.2L989.1 418.1L984.2 422.1L979.3 426.0L974.3 429.9L969.5 433.7L964.7 437.4L960.2 441.0L955.8 444.4L951.7 447.5L947.8 450.5L943.9 453.5L940.0 456.4L936.3 459.1L932.6 461.8L929.1 464.4L925.8 466.7L922.7 468.9L919.8 470.9L917.1 472.7L914.7 474.2L912.6 475.4L911.0 476.3L910.0 477.0L909.5 477.4L909.4 477.6L909.5 477.6L909.6 477.3L909.8 477.0L909.7 476.5L909.3 475.8L908.5 475.1L907.1 474.3L905.0 473.5L902.2 472.5L899.0 471.4L895.3 470.1L891.2 468.6L886.8 467.0L882.2 465.4L877.4 463.7L872.4 461.9L867.4 460.1L862.3 458.4L857.4 456.6L852.5 455.0L847.6 453.4L842.4 451.7L837.0 449.9L831.5 448.2L825.9 446.4L820.3 444.6L814.8 442.9L809.4 441.2L804.1 439.5L799.1 437.9L794.4 436.4L790.0 435.0L785.9 433.7L782.1 432.4L778.5 431.2L775.0 430.1L771.7 429.0L768.6 428.0L765.6 427.0L762.8 426.0L760.1 425.1L757.4 424.2L754.9 423.3L752.5 422.5L750.2 421.7L748.1 421.0L746.2 420.3L744.4 419.7L742.7 419.1L741.1 418.6L739.6 418.0L738.1 417.5L736.7 416.9L735.3 416.3L733.9 415.7L732.5 415.0L731.1 414.3L729.7 413.5L728.3 412.7L726.9 411.9L725.6 411.1L724.4 410.3L723.1 409.5L721.9 408.6L720.8 407.7L719.7 406.8L718.6 405.9L717.5 405.0L716.5 404.0L715.5 403.1L714.5 402.1L713.5 401.0L712.6 400.0L711.7 398.9L710.9 397.8L710.1 396.8L709.4 395.7L708.7 394.6L708.1 393.5L707.5 392.5L707.0 391.5L706.6 390.4L706.2 389.3L705.9 388.2L705.7 387.2L705.5 386.1L705.3 385.0L705.2 384.0L705.1 382.9L705.0 381.9L705.0 381.0Z" fill="url(#grim)" stroke="#2e2e2e" stroke-width="1.1"/>
<path d="M710.5 380.0L710.5 379.3L710.6 378.7L710.6 378.1L710.7 377.5L710.8 377.0L710.9 376.4L711.1 375.8L711.3 375.2L711.5 374.6L711.8 373.9L712.2 373.1L712.5 372.2L712.9 371.3L713.3 370.4L713.8 369.5L714.2 368.6L714.7 367.7L715.2 366.8L715.8 365.9L716.4 364.9L717.0 364.0L717.7 363.0L718.5 362.0L719.3 361.0L720.2 359.9L721.1 358.8L722.2 357.6L723.3 356.4L724.5 355.2L725.7 354.0L727.0 352.7L728.3 351.5L729.6 350.2L731.0 349.0L732.3 347.8L733.6 346.6L734.9 345.5L736.2 344.4L737.6 343.3L738.9 342.2L740.3 341.1L741.6 340.1L743.1 339.0L744.5 337.9L746.0 336.7L747.6 335.6L749.2 334.4L750.8 333.2L752.5 331.9L754.3 330.5L756.1 329.2L758.0 327.8L759.9 326.3L761.8 324.9L763.8 323.5L765.7 322.1L767.6 320.8L769.5 319.5L771.3 318.3L773.0 317.1L774.7 316.0L776.4 314.9L778.1 313.8L779.8 312.8L781.4 311.8L782.9 310.8L784.5 309.9L786.1 309.1L787.6 308.3L789.1 307.5L790.7 306.7L792.2 306.0L793.8 305.4L795.3 304.8L796.9 304.2L798.4 303.7L800.0 303.2L801.5 302.7L803.1 302.2L804.7 301.8L806.3 301.4L807.9 301.1L809.5 300.7L811.1 300.4L812.6 300.1L814.1 299.8L815.6 299.6L817.0 299.4L818.4 299.2L819.8 299.0L821.3 298.9L822.8 298.8L824.4 298.7L826.2 298.6L828.1 298.5L830.1 298.5L832.3 298.5L834.7 298.4L837.2 298.4L839.7 298.4L842.4 298.4L845.1 298.5L847.8 298.5L850.6 298.6L853.3 298.8L856.1 299.0L858.7 299.2L861.4 299.5L863.9 299.8L866.4 300.1L868.8 300.5L871.1 300.8L873.5 301.3L875.9 301.7L878.4 302.3L881.0 302.8L883.8 303.5L886.8 304.2L890.1 305.0L893.7 305.8L897.5 306.8L901.6 307.9L905.9 309.0L910.4 310.2L915.1 311.5L919.9 312.9L924.9 314.3L929.9 315.7L935.0 317.1L940.2 318.5L945.4 319.9L950.6 321.3L955.9 322.7L961.6 324.2L967.5 325.7L973.5 327.3L979.6 328.8L985.7 330.4L991.6 331.9L997.5 333.4L1003.0 334.8L1008.2 336.1L1013.0 337.3L1017.3 338.3L1021.1 339.3L1024.7 340.1L1027.9 340.9L1030.8 341.5L1033.4 342.1L1035.8 342.6L1038.0 343.1L1039.9 343.5L1041.7 343.9L1043.3 344.3L1044.8 344.8L1046.3 345.2L1047.6 345.7L1048.6 346.1L1049.4 346.4L1049.9 346.6L1050.2 346.8L1050.4 346.9L1050.4 346.9L1050.4 347.0L1050.5 347.1L1050.7 347.3L1051.0 347.8L1051.3 348.3L1051.5 348.7L1051.7 349.1L1051.8 349.5L1052.0 350.1L1052.2 350.7L1052.3 351.4L1052.4 352.0L1052.4 352.6L1052.4 353.1L1052.4 353.6L1052.4 353.9L1052.3 354.4L1052.1 355.4L1052.3 357.6L1055.2 361.1L1060.0 361.3L1061.3 351.9L1055.9 351.0L1054.7 351.6L1053.9 352.1L1052.9 352.9L1051.7 353.9L1050.2 355.2L1048.2 357.0L1045.9 359.2L1043.1 361.9L1040.0 364.9L1036.6 368.2L1033.0 371.7L1029.1 375.5L1025.0 379.4L1020.8 383.3L1016.6 387.3L1012.3 391.2L1008.1 395.0L1003.9 398.6L999.6 402.3L995.1 406.0L990.5 409.9L985.7 413.8L980.8 417.8L975.8 421.7L970.9 425.6L966.1 429.4L961.4 433.1L956.8 436.6L952.4 440.0L948.4 443.1L944.4 446.1L940.5 449.1L936.7 452.0L933.0 454.7L929.4 457.4L925.9 459.9L922.6 462.2L919.6 464.4L916.7 466.3L914.1 468.0L911.8 469.5L909.8 470.7L908.1 471.7L906.8 472.6L905.8 473.4L904.3 475.5L913.3 481.5L914.6 479.7L915.2 477.3L914.8 474.5L913.4 472.2L911.6 470.6L909.4 469.3L906.9 468.3L904.0 467.4L900.8 466.2L897.1 464.9L893.1 463.4L888.7 461.9L884.0 460.2L879.2 458.5L874.2 456.7L869.2 454.9L864.2 453.2L859.1 451.4L854.2 449.8L849.3 448.1L844.1 446.4L838.7 444.7L833.2 442.9L827.6 441.2L822.0 439.4L816.4 437.6L811.0 435.9L805.8 434.3L800.8 432.7L796.0 431.2L791.7 429.8L787.6 428.5L783.8 427.2L780.2 426.0L776.7 424.9L773.4 423.8L770.3 422.8L767.4 421.8L764.5 420.8L761.8 419.9L759.2 419.0L756.7 418.1L754.3 417.3L752.0 416.5L749.9 415.8L747.9 415.1L746.1 414.5L744.5 414.0L742.9 413.4L741.5 412.9L740.1 412.4L738.8 411.9L737.6 411.3L736.3 410.7L735.0 410.1L733.6 409.4L732.3 408.7L731.0 408.0L729.8 407.2L728.6 406.5L727.4 405.7L726.3 405.0L725.2 404.2L724.1 403.4L723.1 402.6L722.1 401.7L721.2 400.9L720.3 400.1L719.3 399.2L718.5 398.3L717.6 397.3L716.8 396.4L716.0 395.5L715.3 394.5L714.6 393.6L713.9 392.7L713.4 391.7L712.9 390.9L712.4 390.1L712.1 389.3L711.8 388.5L711.5 387.7L711.3 386.9L711.1 386.0L710.9 385.2L710.8 384.3L710.7 383.4L710.6 382.6L710.5 381.7L710.5 380.8Z" fill="url(#gbowl)" stroke="#333" stroke-width="1.3" clip-path="url(#clid)"/>
<path d="M727.5 391.0C727.9 386.8 729.2 380.6 732.5 375.0C735.8 369.4 741.2 363.8 747.5 357.5C753.8 351.2 762.1 343.3 770.0 337.5C777.9 331.7 785.4 326.1 795.0 322.5C804.6 318.9 811.7 316.2 827.5 316.0C843.3 315.8 867.1 317.2 890.0 321.0C912.9 324.8 944.2 333.5 965.0 338.8C985.8 344.0 1002.5 348.8 1015.0 352.5C1027.5 356.2 1035.2 358.8 1040.0 361.0C1044.8 363.2 1045.7 362.8 1044.0 366.0C1042.3 369.2 1043.2 369.3 1030.0 380.0C1016.8 390.7 982.1 416.7 965.0 430.0C947.9 443.3 936.2 453.3 927.5 460.0C918.8 466.7 918.8 469.4 912.5 470.0C906.2 470.6 902.1 467.9 890.0 463.8C877.9 459.6 856.7 450.8 840.0 445.0C823.3 439.2 803.3 432.9 790.0 428.8C776.7 424.6 767.5 422.3 760.0 420.0C752.5 417.7 749.0 417.0 745.0 415.0C741.0 413.0 738.5 410.5 736.0 408.0C733.5 405.5 731.4 402.8 730.0 400.0C728.6 397.2 727.1 395.2 727.5 391.0Z" fill="url(#glid)" stroke="#3a3a3a" stroke-width="1"/>
<path d="M709.5 381.0C709.9 379.3 710.4 374.6 712.0 371.0C713.6 367.4 715.3 363.8 719.0 359.5C722.7 355.2 728.7 350.1 734.0 345.5C739.3 340.9 744.5 336.8 751.0 332.0C757.5 327.2 766.2 320.9 773.0 316.5C779.8 312.1 785.7 308.3 792.0 305.5C798.3 302.7 804.7 300.8 811.0 299.5C817.3 298.2 826.8 297.8 830.0 297.5" fill="none" stroke="#f4f4f4" stroke-opacity="0.6" stroke-width="1.8" stroke-linecap="round"/>
<path d="M1067.0 346.6L1069.8 347.2L1073.1 348.0L1077.0 349.1L1081.3 350.3L1085.9 351.7L1090.7 353.2L1095.6 354.8L1100.5 356.4L1105.3 358.0L1109.9 359.6L1114.1 361.1L1118.0 362.4L1121.6 363.7L1125.0 364.9L1128.4 366.2L1131.6 367.5L1134.8 368.7L1137.8 369.9L1140.7 371.2L1143.6 372.4L1146.3 373.6L1148.9 374.7L1151.3 375.9L1153.7 377.0L1155.9 378.1L1158.0 379.1L1160.0 380.1L1161.8 381.1L1163.6 382.1L1165.2 383.1L1166.7 384.0L1168.2 385.0L1169.6 385.9L1170.9 386.9L1172.2 387.9L1173.4 389.0L1174.6 390.1L1175.7 391.2L1176.7 392.4L1177.6 393.6L1178.5 394.8L1179.2 396.0L1180.0 397.2L1180.7 398.4L1181.3 399.5L1181.9 400.6L1182.5 401.7L1183.0 402.7L1183.5 403.6L1184.0 404.5L1184.5 405.4L1184.9 406.1L1185.3 406.9L1185.7 407.6L1185.9 408.4L1186.1 409.2L1186.2 409.9L1186.3 410.8L1186.2 411.7L1186.0 412.6L1185.7 413.6L1185.4 414.5L1185.1 415.5L1184.6 416.4L1184.1 417.4L1183.5 418.4L1182.8 419.5L1181.9 420.6L1181.0 421.9L1179.8 423.3L1178.5 424.8L1177.0 426.4L1175.3 428.2L1173.3 430.2L1171.1 432.4L1168.8 434.7L1166.3 437.1L1163.7 439.6L1161.0 442.1L1158.3 444.6L1155.6 447.1L1152.9 449.5L1150.3 451.8L1147.8 454.0L1145.3 456.1L1142.9 458.3L1140.4 460.4L1137.9 462.5L1135.4 464.5L1132.9 466.5L1130.4 468.5L1127.9 470.5L1125.4 472.3L1122.9 474.2L1120.5 475.9L1118.0 477.6L1115.5 479.2L1113.0 480.8L1110.4 482.4L1107.8 483.9L1105.2 485.3L1102.6 486.7L1100.1 488.1L1097.6 489.3L1095.2 490.5L1092.9 491.5L1090.7 492.5L1088.7 493.4L1086.9 494.1L1085.2 494.8L1083.8 495.3L1082.5 495.7L1081.2 496.0L1080.0 496.2L1078.8 496.4L1077.5 496.6L1076.1 496.7L1074.6 496.9L1072.9 497.1L1071.0 497.3L1068.9 497.6L1066.6 497.8L1064.3 498.1L1061.8 498.3L1059.2 498.5L1056.6 498.8L1053.8 498.9L1051.0 499.1L1048.2 499.2L1045.3 499.3L1042.4 499.3L1039.4 499.3L1036.4 499.2L1033.3 499.1L1030.1 499.0L1026.9 498.8L1023.6 498.6L1020.2 498.3L1016.9 498.0L1013.5 497.7L1010.1 497.3L1006.7 496.9L1003.3 496.5L1000.0 496.0L996.7 495.5L993.3 494.9L989.8 494.2L986.3 493.5L982.9 492.8L979.4 492.0L976.0 491.2L972.6 490.4L969.3 489.6L966.1 488.9L963.0 488.2L960.0 487.5L957.1 486.9L954.2 486.2L951.4 485.6L948.6 484.9L945.8 484.3L943.2 483.7L940.6 483.1L938.2 482.5L935.9 482.0L933.8 481.4L931.8 481.0L930.0 480.5L928.4 480.1L926.9 479.7L925.6 479.4L924.4 479.2L923.4 478.9L922.5 478.7L921.7 478.5L921.0 478.2L920.4 478.0L919.9 477.7L919.4 477.4L919.0 477.0L918.6 476.7L918.2 476.4L917.7 476.3L917.3 476.1L917.0 475.9L916.9 475.7L916.9 475.4L917.1 474.9L917.6 474.3L918.4 473.5L919.5 472.4L921.0 471.0L922.9 469.3L925.2 467.4L927.9 465.2L930.9 462.9L934.1 460.4L937.5 457.7L941.1 454.9L944.8 452.0L948.6 449.0L952.4 446.0L956.2 443.0L960.0 440.0L963.8 436.9L967.8 433.7L972.0 430.3L976.2 426.9L980.6 423.3L984.9 419.8L989.3 416.2L993.7 412.6L997.9 409.1L1002.1 405.6L1006.1 402.2L1010.0 399.0L1013.8 395.8L1017.6 392.6L1021.4 389.3L1025.2 386.0L1028.9 382.8L1032.5 379.7L1036.0 376.6L1039.3 373.7L1042.3 371.0L1045.2 368.4L1047.7 366.1L1050.0 364.0L1051.9 362.2L1053.4 360.6L1054.7 359.2L1055.7 358.1L1056.4 357.0L1057.1 356.1L1057.6 355.4L1058.0 354.7L1058.4 354.0L1058.9 353.4L1059.4 352.7L1060.0 352.0L1060.5 351.3L1060.8 350.5L1060.9 349.7L1060.9 348.9L1060.9 348.2L1060.9 347.6L1061.1 347.0L1061.5 346.6L1062.2 346.3L1063.3 346.2L1064.9 346.3Z" fill="#9fd0f2" fill-opacity="0.35" stroke="#1e2a33" stroke-width="1.1"/>
<path d="M1066.3 350.5L1068.9 351.1L1072.1 351.9L1075.9 352.9L1080.2 354.2L1084.7 355.6L1089.5 357.1L1094.4 358.6L1099.2 360.2L1104.0 361.8L1108.6 363.4L1112.8 364.8L1116.7 366.2L1120.2 367.4L1123.6 368.7L1127.0 369.9L1130.2 371.2L1133.3 372.4L1136.3 373.6L1139.2 374.8L1142.0 376.0L1144.6 377.2L1147.2 378.4L1149.6 379.5L1152.0 380.6L1154.2 381.7L1156.2 382.7L1158.1 383.7L1159.9 384.6L1161.6 385.6L1163.1 386.5L1164.6 387.4L1165.9 388.3L1167.2 389.2L1168.4 390.1L1169.6 391.0L1170.7 392.0L1171.8 392.9L1172.7 393.9L1173.6 394.9L1174.4 396.0L1175.2 397.0L1175.9 398.1L1176.5 399.2L1177.2 400.3L1177.8 401.4L1178.4 402.5L1178.9 403.6L1179.5 404.6L1180.0 405.6L1180.5 406.5L1181.0 407.3L1181.4 408.0L1181.7 408.6L1182.0 409.2L1182.1 409.6L1182.2 409.9L1182.3 410.3L1182.3 410.6L1182.2 411.1L1182.1 411.7L1181.9 412.4L1181.7 413.2L1181.4 413.9L1181.0 414.6L1180.6 415.4L1180.1 416.2L1179.5 417.2L1178.8 418.2L1177.8 419.4L1176.8 420.7L1175.5 422.1L1174.1 423.7L1172.4 425.5L1170.5 427.4L1168.3 429.6L1166.0 431.9L1163.5 434.2L1161.0 436.7L1158.3 439.2L1155.6 441.6L1152.9 444.1L1150.3 446.5L1147.7 448.8L1145.2 451.0L1142.7 453.1L1140.3 455.2L1137.8 457.3L1135.3 459.4L1132.9 461.4L1130.4 463.4L1127.9 465.4L1125.5 467.3L1123.0 469.1L1120.6 470.9L1118.2 472.6L1115.8 474.3L1113.4 475.9L1110.9 477.4L1108.3 478.9L1105.8 480.4L1103.2 481.8L1100.7 483.2L1098.2 484.5L1095.8 485.7L1093.5 486.9L1091.2 487.9L1089.1 488.9L1087.2 489.7L1085.4 490.4L1083.9 491.0L1082.6 491.4L1081.4 491.8L1080.3 492.1L1079.3 492.3L1078.2 492.5L1077.0 492.6L1075.7 492.8L1074.2 492.9L1072.5 493.1L1070.5 493.3L1068.4 493.6L1066.2 493.8L1063.9 494.1L1061.4 494.3L1058.9 494.6L1056.3 494.8L1053.6 494.9L1050.8 495.1L1048.0 495.2L1045.2 495.3L1042.3 495.3L1039.5 495.3L1036.5 495.2L1033.5 495.1L1030.3 495.0L1027.1 494.8L1023.9 494.6L1020.6 494.3L1017.2 494.0L1013.9 493.7L1010.5 493.3L1007.2 492.9L1003.9 492.5L1000.6 492.0L997.3 491.5L994.0 490.9L990.6 490.3L987.2 489.6L983.7 488.8L980.3 488.1L976.9 487.3L973.5 486.5L970.2 485.7L967.0 485.0L963.9 484.3L960.9 483.6L958.0 482.9L955.1 482.3L952.2 481.7L949.4 481.0L946.7 480.4L944.1 479.8L941.6 479.2L939.1 478.6L936.9 478.1L934.7 477.6L932.8 477.1L931.0 476.6L929.3 476.2L927.8 475.9L926.5 475.5L925.4 475.3L924.4 475.0L923.5 474.8L922.9 474.6L922.4 474.5L922.1 474.3L921.9 474.3L921.9 474.2L921.6 474.0L920.8 473.3L919.8 472.8L919.2 472.5L919.0 472.5L919.6 472.9L920.7 474.6L920.7 476.6L920.5 477.1L920.6 476.9L921.2 476.3L922.2 475.3L923.7 474.0L925.5 472.4L927.8 470.5L930.4 468.4L933.3 466.0L936.5 463.5L940.0 460.8L943.6 458.0L947.3 455.2L951.1 452.2L954.9 449.2L958.7 446.1L962.5 443.1L966.3 440.0L970.3 436.8L974.5 433.4L978.7 430.0L983.1 426.4L987.5 422.8L991.9 419.3L996.2 415.7L1000.5 412.1L1004.7 408.7L1008.7 405.3L1012.6 402.1L1016.4 398.8L1020.2 395.6L1024.0 392.3L1027.8 389.1L1031.5 385.8L1035.1 382.7L1038.6 379.7L1041.9 376.7L1045.0 374.0L1047.9 371.4L1050.5 369.0L1052.7 366.9L1054.7 365.0L1056.3 363.3L1057.7 361.9L1058.8 360.6L1059.7 359.4L1060.4 358.4L1061.0 357.5L1061.4 356.8L1061.8 356.2L1062.1 355.7L1062.4 355.3L1063.1 354.5L1064.1 353.2L1064.7 351.4L1064.9 349.9L1064.9 348.8L1064.9 348.2L1064.9 348.3L1064.6 349.1L1063.7 350.0L1063.1 350.2L1063.3 350.2L1064.4 350.3Z" fill="url(#gtbowl)" stroke="#1e2a33" stroke-width="0.9"/>
<path d="M1061.0 367.3C1069.9 367.3 1085.7 374.4 1098.5 379.0C1111.3 383.6 1128.2 390.1 1138.0 395.0C1147.8 399.9 1153.3 404.1 1157.6 408.7C1161.8 413.3 1164.2 417.5 1163.5 422.4C1162.8 427.3 1159.6 431.4 1153.7 438.0C1147.8 444.6 1137.2 454.2 1128.0 461.8C1118.8 469.4 1106.7 478.6 1098.5 483.5C1090.3 488.4 1086.9 489.9 1078.8 491.5C1070.7 493.1 1061.5 493.3 1050.0 493.0C1038.5 492.7 1025.0 491.4 1010.0 489.5C995.0 487.6 972.0 483.4 960.0 481.5C948.0 479.6 942.3 479.2 938.0 478.0C933.7 476.8 930.3 478.3 934.0 474.0C937.7 469.7 947.3 462.7 960.0 452.0C972.7 441.3 995.8 422.2 1010.0 410.0C1024.2 397.8 1036.5 386.1 1045.0 379.0C1053.5 371.9 1052.1 367.3 1061.0 367.3Z" fill="#93bfdf" stroke="#1e2a33" stroke-width="1.1"/>
<path d="M1061 367L1098 379L1127 388L965 482L938 478L934 474L960 452L1010 410L1045 379Z" fill="#5a8fc8" fill-opacity="0.16"/>
<path d="M1004.800 412L1143 451.400" stroke="#2a3a46" stroke-width="0.9" fill="none"/>
<g clip-path="url(#cbody)">
<path d="M598.8 414.0 L802.9 237.1 L1156.8 339.5 L952.7 516.4Z" fill="none" stroke="#4f86d0" stroke-opacity="0.85" stroke-width="1.3"/>
<path d="M534.5 473.0 L701.5 329.0 L1145.0 449.5 L978.0 593.5Z" fill="none" stroke="#5f90d4" stroke-opacity="0.7" stroke-width="1.1" clip-path="url(#cfront)"/>
</g>
<path d="M526.5 782.7 L777.0 564.0 L1363.7 732.5 L1113.0 951.0Z" fill="none" stroke="#7f9cc4" stroke-opacity="0.35" stroke-width="1" clip-path="url(#cbody)"/>
<path d="M700.0 850.0 L1150.0 765.0 L1271.0 799.5 L1088.0 958.5Z" fill="none" stroke="#7f9cc4" stroke-opacity="0.3" stroke-width="1" clip-path="url(#cbody)"/>
<path d="M619.0 819.4 L860.0 610.0 L1271.0 745.7 L1030.0 955.1Z" fill="none" stroke="#7f9cc4" stroke-opacity="0.3" stroke-width="1" clip-path="url(#cbody)"/>
<path d="M800 318L1030 380" stroke="#3d4a55" stroke-opacity="0.60" stroke-width="1.0" stroke-dasharray="11 7" fill="none"/>
<path d="M770 338L1005 402" stroke="#3d4a55" stroke-opacity="0.60" stroke-width="1.0" stroke-dasharray="13 8" fill="none"/>
<path d="M745 362L1000 430" stroke="#3d4a55" stroke-opacity="0.60" stroke-width="1.0" stroke-dasharray="12 9" fill="none"/>
<path d="M742 388L975 450" stroke="#3d4a55" stroke-opacity="0.60" stroke-width="1.0" stroke-dasharray="11 8" fill="none"/>
<path d="M760 412L925 457" stroke="#3d4a55" stroke-opacity="0.60" stroke-width="1.0" stroke-dasharray="12 8" fill="none"/>
<path d="M735 345L1040 398" stroke="#3d4a55" stroke-opacity="0.48" stroke-width="1.0" stroke-dasharray="14 7" fill="none"/>
<path d="M748 410L838 330" stroke="#3d4a55" stroke-opacity="0.48" stroke-width="1.0" stroke-dasharray="10 7" fill="none"/>
<path d="M830 445L970 335" stroke="#3d4a55" stroke-opacity="0.44" stroke-width="1.0" stroke-dasharray="10 8" fill="none"/>
<path d="M908 466L1040 362" stroke="#3d4a55" stroke-opacity="0.48" stroke-width="1.0" stroke-dasharray="11 7" fill="none"/>
<path d="M780 428L890 335" stroke="#3d4a55" stroke-opacity="0.40" stroke-width="1.0" stroke-dasharray="9 8" fill="none"/>
<path d="M745 337L1040 400" stroke="#3d4a55" stroke-opacity="0.7" stroke-width="0.9" fill="none"/>
<path d="M747 338L747 412" stroke="#3d4a55" stroke-opacity="0.6" stroke-width="0.9" fill="none"/>
<path d="M800 353L1005 401" stroke="#59636c" stroke-opacity="0.44" stroke-width="2.2" stroke-dasharray="7 3 2 3" fill="none"/>
<path d="M745 392L800 352" stroke="#59636c" stroke-opacity="0.40" stroke-width="2.0" stroke-dasharray="6 3" fill="none"/>
<path d="M803 383L818 402" stroke="#59636c" stroke-opacity="0.48" stroke-width="2.0" stroke-dasharray="5 2" fill="none"/>
<path d="M905 372L1030 404" stroke="#59636c" stroke-opacity="0.32" stroke-width="2.0" stroke-dasharray="6 4" fill="none"/>
<path d="M771.7 462L771.7 719" stroke="#3d4a55" stroke-opacity="0.40" stroke-width="1.0" stroke-dasharray="13 9" fill="none"/>
<path d="M729 470L729 700" stroke="#3d4a55" stroke-opacity="0.32" stroke-width="1.0" stroke-dasharray="12 10" fill="none"/>
<path d="M852.8 380L852.8 847" stroke="#3d4a55" stroke-opacity="0.55" stroke-width="0.8" fill="none"/>
<path d="M991.6 518L991.6 804" stroke="#3d4a55" stroke-opacity="0.40" stroke-width="1.0" stroke-dasharray="13 9" fill="none"/>
<path d="M968 500L968 780" stroke="#3d4a55" stroke-opacity="0.32" stroke-width="1.0" stroke-dasharray="11 10" fill="none"/>
<path d="M945 470L945 560" stroke="#3d4a55" stroke-opacity="0.40" stroke-width="1.0" stroke-dasharray="10 6" fill="none"/>
<path d="M1013 430L1013 560" stroke="#3d4a55" stroke-opacity="0.40" stroke-width="1.0" stroke-dasharray="10 4 2 4" fill="none"/>
<path d="M1060 500L1060 600" stroke="#3d4a55" stroke-opacity="0.28" stroke-width="1.0" stroke-dasharray="10 8" fill="none"/>
<path d="M690 470L900 528" stroke="#3d4a55" stroke-opacity="0.40" stroke-width="1.0" stroke-dasharray="12 8" fill="none"/>
<path d="M700 500L880 548" stroke="#3d4a55" stroke-opacity="0.32" stroke-width="1.0" stroke-dasharray="12 9" fill="none"/>
<path d="M930 520L1075 512" stroke="#3d4a55" stroke-opacity="0.32" stroke-width="1.0" stroke-dasharray="10 8" fill="none"/>
<path d="M1010 520L1160 470" stroke="#3d4a55" stroke-opacity="0.48" stroke-width="1.0" stroke-dasharray="12 8" fill="none"/>
<path d="M915 560L1010 520" stroke="#3d4a55" stroke-opacity="0.36" stroke-width="1.0" stroke-dasharray="10 7" fill="none"/>
<path d="M1000 440L1090 467" stroke="#3d4a55" stroke-opacity="0.40" stroke-width="1.0" stroke-dasharray="11 8" fill="none"/>
<path d="M910 480L1010 560" stroke="#3d4a55" stroke-opacity="0.32" stroke-width="1.0" stroke-dasharray="10 7" fill="none"/>
<path d="M950 540L1075 515" stroke="#3d4a55" stroke-opacity="0.32" stroke-width="1.0" stroke-dasharray="9 6" fill="none"/>
<path d="M990.500 446.700L1003 444L1012 441.500L1022 440L1031 436L1043 433.500" fill="none" stroke="#4e5c68" stroke-width="1.8" stroke-opacity="0.75" stroke-dasharray="8 2"/>
<path d="M1043 433.500L1072.600 426.400" fill="none" stroke="#4e5c68" stroke-width="1" stroke-opacity="0.7"/>
<circle cx="990.500" cy="446.700" r="3" fill="#4a545d" fill-opacity="0.85"/><circle cx="1043" cy="433.500" r="2.600" fill="#4a545d" fill-opacity="0.85"/><circle cx="1072.600" cy="426.400" r="2" fill="#4a545d" fill-opacity="0.8"/>
<path d="M988 431L990.5 520" stroke="#3d4a55" stroke-opacity="0.40" stroke-width="1.0" stroke-dasharray="9 6" fill="none"/>
<g clip-path="url(#cbody)">
<g transform="rotate(4 853 737)"><ellipse cx="853" cy="735" rx="120" ry="55" fill="none" stroke="#3d4a55" stroke-opacity="0.55" stroke-width="1" stroke-dasharray="12 8"/><ellipse cx="853" cy="742" rx="135" ry="66" fill="none" stroke="#3d4a55" stroke-opacity="0.4" stroke-width="1" stroke-dasharray="10 9"/></g>
<path d="M700 735L1000 800" stroke="#3d4a55" stroke-opacity="0.32" stroke-width="1.0" stroke-dasharray="12 9" fill="none"/>
<path d="M735 700L990 760" stroke="#3d4a55" stroke-opacity="0.32" stroke-width="1.0" stroke-dasharray="11 9" fill="none"/>
<path d="M760 790L900 740" stroke="#3d4a55" stroke-opacity="0.32" stroke-width="1.0" stroke-dasharray="10 8" fill="none"/>
<path d="M905 770L1100 810" stroke="#3d4a55" stroke-opacity="0.36" stroke-width="1.0" stroke-dasharray="12 8" fill="none"/>
<path d="M1000 700L1180 800" stroke="#3d4a55" stroke-opacity="0.36" stroke-width="1.0" stroke-dasharray="13 8" fill="none"/>
<path d="M930 790L1130 745" stroke="#3d4a55" stroke-opacity="0.28" stroke-width="1.0" stroke-dasharray="10 9" fill="none"/>
<path d="M780 640L780 800" stroke="#3d4a55" stroke-opacity="0.28" stroke-width="1.0" stroke-dasharray="10 9" fill="none"/>
<path d="M737 650L737 770" stroke="#3d4a55" stroke-opacity="0.28" stroke-width="1.0" stroke-dasharray="10 9" fill="none"/>
</g>
<path d="M664 787C662 812 690 838 735 843C760 845 790 850 815 872" fill="none" stroke="#5a646e" stroke-opacity="0.75" stroke-width="0.9"/>
<path d="M826 866C845 885 870 892 890 889" fill="none" stroke="#5a646e" stroke-opacity="0.7" stroke-width="0.9"/>
<ellipse cx="1120" cy="880" rx="118" ry="52" fill="none" stroke="#5a646e" stroke-opacity="0.6" stroke-width="0.9" stroke-dasharray="14 3 2 3" transform="rotate(-22 1120 880)"/>
<path d="M628 692C636 686 646 683 660 683" fill="none" stroke="#6b747c" stroke-width="1.6"/>
<path d="M850 897L1060 958" stroke="#59636c" stroke-opacity="0.56" stroke-width="1.0" stroke-dasharray="16 4 2 4" fill="none"/>
<path d="M1060 958L1230 870" stroke="#59636c" stroke-opacity="0.40" stroke-width="1.0" stroke-dasharray="16 4 2 4" fill="none"/>
<circle cx="737" cy="323" r="2.1" fill="#4a545d" fill-opacity="0.85"/>
<circle cx="747" cy="353" r="2.1" fill="#4a545d" fill-opacity="0.85"/>
<circle cx="762" cy="361" r="2.1" fill="#4a545d" fill-opacity="0.85"/>
<circle cx="765" cy="392" r="2.1" fill="#4a545d" fill-opacity="0.85"/>
<circle cx="810" cy="350" r="2.1" fill="#4a545d" fill-opacity="0.85"/>
<circle cx="825" cy="347" r="2.1" fill="#4a545d" fill-opacity="0.85"/>
<circle cx="803" cy="382" r="2.1" fill="#4a545d" fill-opacity="0.85"/>
<circle cx="818" cy="400" r="2.1" fill="#4a545d" fill-opacity="0.85"/>
<circle cx="790" cy="420" r="2.1" fill="#4a545d" fill-opacity="0.85"/>
<circle cx="908" cy="372" r="2.1" fill="#4a545d" fill-opacity="0.85"/>
<circle cx="765" cy="437" r="2.1" fill="#4a545d" fill-opacity="0.85"/>
<circle cx="805" cy="460" r="2.1" fill="#4a545d" fill-opacity="0.85"/>
<circle cx="980" cy="395" r="2.1" fill="#4a545d" fill-opacity="0.85"/>
<circle cx="1010" cy="358" r="2.1" fill="#4a545d" fill-opacity="0.85"/>
<circle cx="1003" cy="395" r="2.1" fill="#4a545d" fill-opacity="0.85"/>
<circle cx="1012" cy="398" r="2.1" fill="#4a545d" fill-opacity="0.85"/>
<circle cx="737" cy="435" r="2.1" fill="#4a545d" fill-opacity="0.85"/>
<circle cx="722" cy="428" r="2.1" fill="#4a545d" fill-opacity="0.85"/>
<circle cx="820" cy="347" r="2.1" fill="#4a545d" fill-opacity="0.85"/>
<circle cx="905" cy="402" r="2.1" fill="#4a545d" fill-opacity="0.85"/>
<circle cx="945" cy="520" r="2.1" fill="#4a545d" fill-opacity="0.85"/>
<circle cx="1147" cy="455" r="2.1" fill="#4a545d" fill-opacity="0.85"/>
<circle cx="1090" cy="470" r="2.1" fill="#4a545d" fill-opacity="0.85"/>
<circle cx="1040" cy="485" r="2.1" fill="#4a545d" fill-opacity="0.85"/>
<circle cx="1054" cy="530" r="2.1" fill="#4a545d" fill-opacity="0.85"/>
<circle cx="945" cy="560" r="2.1" fill="#4a545d" fill-opacity="0.85"/>
<circle cx="911" cy="660" r="2.1" fill="#4a545d" fill-opacity="0.85"/>
<circle cx="900" cy="745" r="2.1" fill="#4a545d" fill-opacity="0.85"/>
<circle cx="897" cy="760" r="2.1" fill="#4a545d" fill-opacity="0.85"/>
<circle cx="628" cy="692" r="2.1" fill="#4a545d" fill-opacity="0.85"/>
<circle cx="849" cy="896" r="2.1" fill="#4a545d" fill-opacity="0.85"/>
<circle cx="815" cy="872" r="2.1" fill="#4a545d" fill-opacity="0.85"/>
<circle cx="434" cy="907" r="2.1" fill="#4a545d" fill-opacity="0.85"/>
<circle cx="599" cy="767" r="2.1" fill="#4a545d" fill-opacity="0.85"/>
<circle cx="781" cy="1007" r="2.1" fill="#4a545d" fill-opacity="0.85"/>
<circle cx="1204" cy="921" r="2.1" fill="#4a545d" fill-opacity="0.85"/>
<circle cx="1204" cy="942" r="2.1" fill="#4a545d" fill-opacity="0.85"/>
<circle cx="1089" cy="800" r="2.1" fill="#4a545d" fill-opacity="0.85"/>
<circle cx="1112" cy="812" r="2.1" fill="#4a545d" fill-opacity="0.85"/>
<circle cx="1035" cy="805" r="2.1" fill="#4a545d" fill-opacity="0.85"/>
<circle cx="970" cy="690" r="2.1" fill="#4a545d" fill-opacity="0.85"/>
<circle cx="970" cy="782" r="2.1" fill="#4a545d" fill-opacity="0.85"/>
<circle cx="1160" cy="880" r="2.1" fill="#4a545d" fill-opacity="0.85"/>
<circle cx="903" cy="368" r="2.2" fill="#ffffff" fill-opacity="1" stroke="#7d8994" stroke-width="0.7"/>
<circle cx="747" cy="385" r="2.2" fill="#ffffff" fill-opacity="1" stroke="#7d8994" stroke-width="0.7"/>
<circle cx="853" cy="468" r="2.2" fill="#ffffff" fill-opacity="1" stroke="#7d8994" stroke-width="0.7"/>
<circle cx="693.2" cy="702.4" r="2.2" fill="#ffffff" fill-opacity="1" stroke="#7d8994" stroke-width="0.7"/>
<circle cx="780.3" cy="765" r="2.2" fill="#ffffff" fill-opacity="1" stroke="#7d8994" stroke-width="0.7"/>
<circle cx="853.5" cy="786.7" r="2.2" fill="#ffffff" fill-opacity="1" stroke="#7d8994" stroke-width="0.7"/>
<circle cx="983.6" cy="741.9" r="2.2" fill="#ffffff" fill-opacity="1" stroke="#7d8994" stroke-width="0.7"/>
<circle cx="995.8" cy="773.6" r="2.2" fill="#ffffff" fill-opacity="1" stroke="#7d8994" stroke-width="0.7"/>
<circle cx="1183" cy="812" r="2.2" fill="#ffffff" fill-opacity="1" stroke="#7d8994" stroke-width="0.7"/>
<circle cx="1173" cy="823" r="2.2" fill="#ffffff" fill-opacity="1" stroke="#7d8994" stroke-width="0.7"/>
<circle cx="905" cy="882" r="2.2" fill="#ffffff" fill-opacity="1" stroke="#7d8994" stroke-width="0.7"/>
<circle cx="1100" cy="907" r="2.2" fill="#ffffff" fill-opacity="1" stroke="#7d8994" stroke-width="0.7"/>
<circle cx="944.4" cy="744.8" r="4.2" fill="#d9e2e8" stroke="#55616b" stroke-width="0.9"/><circle cx="944.4" cy="744.8" r="1.6" fill="#55616b"/>
<path d="M737.800 322.500C741 336 749 349 762 356.500" fill="none" stroke="#59636c" stroke-width="1" stroke-opacity="0.85"/>
<path d="M713.200 349.200L745 333" fill="none" stroke="#59636c" stroke-width="1" stroke-opacity="0.85"/>
<circle cx="713.2" cy="349.2" r="2.2" fill="#4a545d" fill-opacity="0.85"/>
<circle cx="743" cy="334" r="2.2" fill="#4a545d" fill-opacity="0.85"/>
<ellipse cx="853" cy="417" rx="15.500" ry="8.500" fill="#f4f6f8" stroke="#56708c" stroke-width="1.200"/>
<ellipse cx="851" cy="417.500" rx="10" ry="5" fill="none" stroke="#56708c" stroke-width="1"/>
<path d="M853 417L867 412L868 420Z" fill="#fff"/>
<path d="M861 409L867 404" stroke="#e02020" stroke-width="2"/>
<path d="M871 421L881 424" stroke="#20a040" stroke-width="2"/>
<path d="M853.500 421V436" stroke="#1010e0" stroke-width="3"/>
</svg>
<div id="hdr"></div>
<span class="t " style="left:5.60px;top:6.70px;font-size:20.5px;color:#1a4fae;letter-spacing:-2.453px;font-weight:bold;-webkit-text-stroke:0.55px #1a4fae;">Onshape</span>
<svg style="left:90px;top:12px" width="17" height="15" viewBox="0 0 17 15"><path d="M0.5 2.2h15.4M0.5 7.5h15.4M0.5 12.8h15.4" stroke="#1c1c1c" stroke-width="2.3"/></svg>
<svg style="left:116px;top:10px" width="21" height="19" viewBox="0 0 21 19"><g fill="none" stroke="#1c1c1c" stroke-width="1.5"><circle cx="4.2" cy="4.6" r="2.6"/><circle cx="4.2" cy="15" r="1.6" fill="#1c1c1c"/><path d="M4.2 7.2V13.5M4.2 13c0-3 3-3.5 5.5-3.7"/><path d="M9.5 2.6H19.5M11.5 7.4H19.5M11.5 12.3H19.5M10 17H19.5"/></g></svg>
<span class="t " style="left:152.30px;top:10.14px;font-size:19.5px;color:#1f1f1f;letter-spacing:-0.095px;font-weight:bold;">Hyku</span>
<span class="t " style="left:213.40px;top:12.10px;font-size:15px;color:#7a7a7a;letter-spacing:-0.169px;">200503 - DFM Handoff</span>
<svg style="left:1088px;top:10px" width="20" height="18" viewBox="0 0 20 18"><ellipse cx="9.8" cy="7.4" rx="8.8" ry="6.2" fill="#5f5f5f"/><path d="M5 11.5 L2.5 16.8 L10 12.8Z" fill="#5f5f5f"/></svg>
<svg style="left:1117px;top:9px" width="22" height="20" viewBox="0 0 22 20"><g fill="none" stroke="#4d4d4d" stroke-width="1.5"><path d="M6.3 2.3c-2.6 0-3 0.8-3 2.6v2.4c0 1.4-0.6 2.2-2 2.4c1.4 0.2 2 1 2 2.4v2.6c0 1.8 0.4 2.6 3 2.6"/><path d="M15.7 2.3c2.6 0 3 0.8 3 2.6v2.4c0 1.4 0.6 2.2 2 2.4c-1.4 0.2-2 1-2 2.4v2.6c0 1.8-0.4 2.6-3 2.6"/><path d="M7.2 9.6l2.8 3 4.6-6" stroke-width="1.7"/></g></svg>
<svg style="left:1149px;top:12px" width="18" height="16" viewBox="0 0 18 16"><path d="M8.5 0.8c3.3 0 4.9 2.4 4.9 5.4c0 3.4 1.1 5 2.8 6.6v1H0.8v-1c1.7-1.6 2.8-3.2 2.8-6.6c0-3 1.6-5.4 4.9-5.4z" fill="#666"/><path d="M6.3 14.2a2.3 2.3 0 0 0 4.4 0z" fill="#666"/></svg>
<div class="abs" style="left:1158px;top:6px;width:14px;height:14px;background:#1b55b3;border-radius:2px;"></div>
<span class="t " style="left:1161.60px;top:3.56px;font-size:10.5px;color:#fff;letter-spacing:0.000px;font-weight:bold;">5</span>
<div class="btn" style="left:1177px;width:80px;"></div>
<span class="t " style="left:1188.60px;top:8.43px;font-size:12.6px;color:#333;letter-spacing:0.045px;">App Store</span>
<div class="btn" style="left:1265px;width:117px;"></div>
<span class="t " style="left:1277.00px;top:8.43px;font-size:12.6px;color:#333;letter-spacing:0.117px;">Learning Center</span>
<div class="btn" style="left:1390px;width:57.5px;background:#1b55b3;border-color:#1b55b3;"></div>
<span class="t " style="left:1401.80px;top:8.36px;font-size:12.8px;color:#fff;letter-spacing:-0.444px;font-weight:bold;">Share</span>
<svg style="left:1457px;top:11px" width="30" height="17" viewBox="0 0 30 17"><circle cx="8.4" cy="8.4" r="8.2" fill="#5c5c5c"/><path d="M5.6 6.6c0-1.8 1.3-2.9 3-2.9c1.7 0 2.9 1 2.9 2.5c0 1.3-0.8 1.9-1.6 2.5c-0.6 0.5-0.9 0.8-0.9 1.7" fill="none" stroke="#fff" stroke-width="2"/><circle cx="8.9" cy="13" r="1.25" fill="#fff"/><path d="M21.6 6.8h6l-3 3.2z" fill="#333"/></svg>
<svg style="left:1494px;top:8px" width="24" height="24" viewBox="0 0 24 24"><defs><clipPath id="avc"><circle cx="11.6" cy="11.6" r="11.5"/></clipPath></defs><circle cx="11.6" cy="11.6" r="11.5" fill="#1b55b3"/><g clip-path="url(#avc)" fill="#fff"><ellipse cx="11.6" cy="9.6" rx="5.6" ry="6"/><path d="M1.5 24c0-5.5 4-8.6 10.1-8.6s10.1 3.100 10.100 8.600z"/></g></svg>
<span class="t " style="left:1520.80px;top:8.43px;font-size:12.6px;color:#333;letter-spacing:-0.016px;">Lucas Lappe</span>
<svg style="left:1594px;top:16px" width="6" height="6" viewBox="0 0 6 6"><path d="M0.800 1.800h6l-3 3.200z" fill="#333"/></svg>
<div id="sub"></div>
<span class="t " style="left:8.90px;top:44.30px;font-size:12.4px;color:#222;letter-spacing:0.600px;-webkit-text-stroke:0.45px #222;">Versions are view only.</span>
<div class="abs" style="left:157px;top:45px;width:1px;height:19px;background:#c9c9c9;"></div>
<span class="t " style="left:166.00px;top:44.30px;font-size:12.4px;color:#1b55b3;letter-spacing:0.544px;-webkit-text-stroke:0.45px #1b55b3;">Return to B3 - Active</span>
<div id="panel"></div>
<span class="t " style="left:5.00px;top:75.70px;font-size:12.4px;color:#222;letter-spacing:-0.071px;-webkit-text-stroke:0.4px #222;">Features (146)</span>
<svg style="left:155px;top:78px" width="18" height="19" viewBox="0 0 18 19"><g fill="none" stroke="#111" stroke-width="1.5"><circle cx="8.6" cy="10.600" r="6.600"/><path d="M6.400 1.300h4.400M8.600 1.500v2.400M13.300 3.600l1.500 1.400" stroke-width="1.6"/><path d="M8.600 10.600l2.600 2.800" stroke-width="1.200"/></g></svg>
<div class="abs" style="left:2px;top:83px;width:42px;height:19.5px;background:#595959;border-radius:1px;box-shadow:0 1px 3px rgba(0,0,0,0.3);"></div>
<span class="t " style="left:8.20px;top:82.33px;font-size:10.6px;color:#fff;letter-spacing:-0.409px;font-weight:bold;">Lucas</span>
<svg style="left:13px;top:108px" width="16" height="16" viewBox="0 0 16 16"><path d="M1 1.300h14l-5.600 6.600v5.200l-2.600 1.600v-6.800z" fill="none" stroke="#333" stroke-width="1.100" stroke-linejoin="round"/></svg>
<div class="abs" style="left:40px;top:102px;width:135.500px;height:27.500px;box-sizing:border-box;border:1px solid #cfcfcf;border-radius:3px;background:#fff;"></div>
<span class="t " style="left:45.60px;top:105.84px;font-size:12px;color:#9a9a9a;letter-spacing:-0.078px;font-style:italic;">Filter by name or type</span>
<div class="abs" style="left:174px;top:134px;width:13px;height:663px;background:#fafafa;border-left:1px solid #ececec;border-right:1px solid #ececec;box-sizing:border-box;"></div>
<div class="abs" style="left:177px;top:137px;width:7px;height:597.500px;background:#c4c4c4;border-radius:3.500px;"></div>
<div class="abs" style="left:0;top:797px;width:187px;height:1px;background:#cfcfcf;"></div>
<svg style="left:3px;top:141.50px" width="13" height="9" viewBox="0 0 13 9"><path d="M1.400 1.700l5.100 5l5.100-5" fill="none" stroke="#2e2e2e" stroke-width="1.800"/></svg>
<span class="t " style="left:22.00px;top:135.94px;font-size:12px;color:#2a2a2a;letter-spacing:0.208px;">Default geometry</span>
<svg style="left:26px;top:165.29px" width="10" height="10" viewBox="0 0 10 10"><circle cx="5" cy="5" r="3.300" fill="#fff" stroke="#666" stroke-width="0.900"/><circle cx="5" cy="5" r="1.300" fill="#333"/></svg>
<span class="t " style="left:43.40px;top:160.23px;font-size:12px;color:#2a2a2a;letter-spacing:-0.032px;">Origin</span>
<svg style="left:24px;top:187.08px;opacity:1" width="15" height="15" viewBox="0 0 15 15"><path d="M0.600 0.800L13.600 2.600V13.900L0.600 11.500Z" fill="#dcdcdc" stroke="#8c8c8c" stroke-width="1"/><path d="M6.600 1.800V6.800L13.400 8" fill="none" stroke="#777" stroke-width="1"/></svg>
<span class="t " style="left:43.40px;top:184.52px;font-size:12px;color:#2a2a2a;letter-spacing:0.376px;">Top</span>
<svg style="left:24px;top:211.37px;opacity:1" width="15" height="15" viewBox="0 0 15 15"><path d="M0.600 0.800L13.600 2.600V13.900L0.600 11.500Z" fill="#dcdcdc" stroke="#8c8c8c" stroke-width="1"/><path d="M6.600 1.800V6.800L13.400 8" fill="none" stroke="#777" stroke-width="1"/></svg>
<span class="t " style="left:43.40px;top:208.81px;font-size:12px;color:#2a2a2a;letter-spacing:0.148px;">Front</span>
<svg style="left:24px;top:235.66px;opacity:1" width="15" height="15" viewBox="0 0 15 15"><path d="M0.600 0.800L13.600 2.600V13.900L0.600 11.500Z" fill="#dcdcdc" stroke="#8c8c8c" stroke-width="1"/><path d="M6.600 1.800V6.800L13.400 8" fill="none" stroke="#777" stroke-width="1"/></svg>
<span class="t " style="left:43.40px;top:233.10px;font-size:12px;color:#2a2a2a;letter-spacing:0.021px;">Right</span>
<svg style="left:4px;top:259.45px" width="17" height="16" viewBox="0 0 17 16"><g fill="none" stroke="#555" stroke-width="1.200"><path d="M3.400 1.500c-2.600 3.600-2.600 9.400 0 13"/><path d="M13.600 1.500c2.600 3.600 2.600 9.400 0 13"/></g><text x="8.500" y="12" font-family="Liberation Serif,serif" font-style="italic" font-weight="bold" font-size="13.500" text-anchor="middle" fill="#3a3a3a">x</text></svg>
<span class="t " style="left:24.50px;top:257.39px;font-size:12px;color:#2a2a2a;letter-spacing:0.162px;">#Wall_thickness_tray ...</span>
<svg style="left:4px;top:283.74px" width="17" height="16" viewBox="0 0 17 16"><g fill="none" stroke="#555" stroke-width="1.200"><path d="M3.400 1.500c-2.600 3.600-2.600 9.400 0 13"/><path d="M13.600 1.500c2.600 3.600 2.600 9.400 0 13"/></g><text x="8.500" y="12" font-family="Liberation Serif,serif" font-style="italic" font-weight="bold" font-size="13.500" text-anchor="middle" fill="#3a3a3a">x</text></svg>
<span class="t " style="left:24.50px;top:281.68px;font-size:12px;color:#2a2a2a;letter-spacing:0.184px;">#VentWidth = 2 mm</span>
<svg style="left:5px;top:310.03px" width="9" height="12" viewBox="0 0 9 12"><path d="M1.800 1.200l4.800 4.800l-4.800 4.800" fill="none" stroke="#3a3a3a" stroke-width="1.700"/></svg>
<span class="t " style="left:22.00px;top:305.97px;font-size:12px;color:#9a9a9a;letter-spacing:-0.076px;font-style:italic;text-decoration:line-through;">ID Forms (8)</span>
<svg style="left:5px;top:334.32px" width="9" height="12" viewBox="0 0 9 12"><path d="M1.800 1.200l4.800 4.800l-4.800 4.800" fill="none" stroke="#3a3a3a" stroke-width="1.700"/></svg>
<span class="t " style="left:22.00px;top:330.26px;font-size:12px;color:#2a2a2a;letter-spacing:0.011px;">Basic Form (33)</span>
<svg style="left:5px;top:356.61px" width="16" height="16" viewBox="0 0 16 16"><circle cx="7.500" cy="8" r="6.800" fill="#9a9a9a" stroke="#7a7a7a" stroke-width="0.800"/><path d="M14.500 4.500L8.500 8L14.500 12" fill="#fff" stroke="#fff" stroke-width="1.500"/><circle cx="7.200" cy="8" r="2.200" fill="#eee"/><path d="M9 6.200l3.500-2M9 9.800l3.500 2" stroke="#666" stroke-width="0.900"/></svg>
<span class="t " style="left:24.70px;top:354.55px;font-size:12px;color:#2a2a2a;letter-spacing:-0.231px;">Wick</span>
<svg style="left:5px;top:381.40px;opacity:1" width="15" height="15" viewBox="0 0 15 15"><path d="M0.600 0.800L13.600 2.600V13.900L0.600 11.500Z" fill="#dcdcdc" stroke="#8c8c8c" stroke-width="1"/><path d="M6.600 1.800V6.800L13.400 8" fill="none" stroke="#777" stroke-width="1"/></svg>
<span class="t " style="left:24.70px;top:378.84px;font-size:12px;color:#2a2a2a;letter-spacing:0.070px;">Fan Bottom Plane</span>
<svg style="left:5px;top:407.19px" width="9" height="12" viewBox="0 0 9 12"><path d="M1.800 1.200l4.800 4.800l-4.800 4.800" fill="none" stroke="#3a3a3a" stroke-width="1.700"/></svg>
<span class="t " style="left:22.00px;top:403.13px;font-size:12px;color:#2a2a2a;letter-spacing:-0.036px;">Derived 120mm Fan (5)</span>
<svg style="left:5px;top:431.48px" width="9" height="12" viewBox="0 0 9 12"><path d="M1.800 1.200l4.800 4.800l-4.800 4.800" fill="none" stroke="#3a3a3a" stroke-width="1.700"/></svg>
<span class="t " style="left:22.00px;top:427.42px;font-size:12px;color:#d9563a;letter-spacing:-0.006px;">Cowling (28)</span>
<svg style="left:5px;top:455.77px" width="9" height="12" viewBox="0 0 9 12"><path d="M1.800 1.200l4.800 4.800l-4.800 4.800" fill="none" stroke="#3a3a3a" stroke-width="1.700"/></svg>
<span class="t " style="left:22.00px;top:451.71px;font-size:12px;color:#2a2a2a;letter-spacing:-0.059px;">Fan Mounting (2)</span>
<svg style="left:5px;top:478.06px" width="16" height="16" viewBox="0 0 16 16"><path d="M9.500 1.200l4.600 3.600l-3.400 4.600l-4.600-3.600z" fill="#e4e4e4" stroke="#d9d9d9" stroke-width="1"/><rect x="1" y="8" width="6" height="6.500" rx="1" fill="#fff" stroke="#d9d9d9" stroke-width="1"/><path d="M2 6c0.300-2.500 1.600-4 3.800-4.600" fill="none" stroke="#d9d9d9" stroke-width="1.400"/><path d="M9 14c2.400-0.200 4-1.400 4.800-3.400" fill="none" stroke="#d9d9d9" stroke-width="1.400"/><path d="M3.500 0.600l2.800 0.800l-1.800 2z" fill="#d9d9d9"/><path d="M14.800 9.600l-0.400 3l-2.400-1.400z" fill="#d9d9d9"/></svg>
<span class="t " style="left:24.70px;top:476.00px;font-size:12px;color:#9a9a9a;letter-spacing:0.401px;font-style:italic;text-decoration:line-through;">Transform 8</span>
<svg style="left:5px;top:502.35px" width="16" height="16" viewBox="0 0 16 16"><path d="M1 9.500h4l2-2.500h3l2 2.500h3v5.500h-14z" fill="#f4f4f4" stroke="#d2d2d2" stroke-width="1.100"/><path d="M8.300 8V1.500M6.300 3.500l2-2.300l2 2.300" fill="none" stroke="#d2d2d2" stroke-width="1.200"/></svg>
<span class="t " style="left:24.70px;top:500.29px;font-size:12px;color:#9a9a9a;letter-spacing:-0.057px;font-style:italic;text-decoration:line-through;">Move face 7</span>
<svg style="left:5px;top:526.64px" width="16" height="16" viewBox="0 0 16 16"><path d="M2.600 11.600L11.800 1.600l2.600 2.200L5.400 13.800l-3.600 1z" fill="#fff" stroke="#444" stroke-width="1.100" stroke-linejoin="round"/><path d="M0.500 15.300H12" stroke="#5577bb" stroke-width="1"/></svg>
<span class="t " style="left:24.70px;top:524.58px;font-size:12px;color:#2a2a2a;letter-spacing:-0.028px;">Sketch 2</span>
<svg style="left:5px;top:550.93px" width="16" height="16" viewBox="0 0 16 16"><path d="M1 3.200l2-2.200h10.500l1.500 1.600v11.400l-2 1.200H2.600L1 13.600z" fill="#f2f2f2" stroke="#8a8a8a" stroke-width="1"/><rect x="5.600" y="6.200" width="8.600" height="8.600" fill="#8f8f8f" stroke="#666" stroke-width="0.800"/><path d="M5.600 6.200l1.600-1.600h7.200" fill="none" stroke="#666" stroke-width="0.800"/></svg>
<span class="t " style="left:24.70px;top:548.87px;font-size:12px;color:#2a2a2a;letter-spacing:0.054px;">Extrude 2</span>
<svg style="left:5px;top:575.22px" width="16" height="16" viewBox="0 0 16 16"><path d="M1 7c0-3.600 2.400-6 6-6h7.200v12.600l-1.800 1.600H2.600L1 13.800z" fill="#fff" stroke="#666" stroke-width="1.100"/><path d="M2.800 8.200c0-3 2-5.200 5.200-5.400" fill="none" stroke="#888" stroke-width="1"/><path d="M1.200 6.500c0.500-3 2.500-5 5.500-5.400l1 1.800c-2.500 0.400-4.300 2-4.800 4.600z" fill="#bdbdbd"/></svg>
<span class="t " style="left:24.70px;top:573.16px;font-size:12px;color:#2a2a2a;letter-spacing:0.165px;">Fillet 1</span>
<svg style="left:5px;top:600.01px;opacity:1" width="15" height="15" viewBox="0 0 15 15"><path d="M0.600 0.800L13.600 2.600V13.900L0.600 11.500Z" fill="#dcdcdc" stroke="#8c8c8c" stroke-width="1"/><path d="M6.600 1.800V6.800L13.400 8" fill="none" stroke="#777" stroke-width="1"/></svg>
<span class="t " style="left:24.70px;top:597.45px;font-size:12px;color:#2a2a2a;letter-spacing:-0.150px;">Plane 2</span>
<svg style="left:5px;top:623.80px" width="16" height="16" viewBox="0 0 16 16"><rect x="1" y="1" width="13.600" height="14" rx="2" fill="#eee" stroke="#8a8a8a" stroke-width="1"/><rect x="5" y="1.600" width="6.400" height="12.800" fill="#8c8c8c"/><path d="M11.400 1.600v12.800" stroke="#555" stroke-width="1"/></svg>
<span class="t " style="left:24.70px;top:621.74px;font-size:12px;color:#2a2a2a;letter-spacing:-0.008px;">Base Shell</span>
<svg style="left:5px;top:648.09px" width="16" height="16" viewBox="0 0 16 16"><path d="M9.500 1.200l4.600 3.600l-3.400 4.600l-4.600-3.600z" fill="#8a8a8a" stroke="#555" stroke-width="1"/><rect x="1" y="8" width="6" height="6.500" rx="1" fill="#fff" stroke="#555" stroke-width="1"/><path d="M2 6c0.300-2.500 1.600-4 3.800-4.600" fill="none" stroke="#555" stroke-width="1.400"/><path d="M9 14c2.400-0.200 4-1.400 4.800-3.400" fill="none" stroke="#555" stroke-width="1.400"/><path d="M3.500 0.600l2.800 0.800l-1.800 2z" fill="#555"/><path d="M14.800 9.600l-0.400 3l-2.400-1.400z" fill="#555"/></svg>
<span class="t " style="left:24.70px;top:646.03px;font-size:12px;color:#2a2a2a;letter-spacing:0.226px;">Transform 7</span>
<svg style="left:5px;top:674.38px" width="9" height="12" viewBox="0 0 9 12"><path d="M1.800 1.200l4.800 4.800l-4.800 4.800" fill="none" stroke="#3a3a3a" stroke-width="1.700"/></svg>
<span class="t " style="left:22.00px;top:670.32px;font-size:12px;color:#2a2a2a;letter-spacing:-0.014px;">Water Path (6)</span>
<svg style="left:5px;top:698.67px" width="9" height="12" viewBox="0 0 9 12"><path d="M1.800 1.200l4.800 4.800l-4.800 4.800" fill="none" stroke="#3a3a3a" stroke-width="1.700"/></svg>
<span class="t " style="left:22.00px;top:694.61px;font-size:12px;color:#d9563a;letter-spacing:0.084px;">Bottom Vents (18)</span>
<svg style="left:5px;top:720.96px" width="16" height="16" viewBox="0 0 16 16"><path d="M1 3c0-1 0.600-1.800 1.600-1.800H6v12.600H2.600C1.600 13.800 1 13 1 12z" fill="#f3f3f3" stroke="#8a8a8a" stroke-width="1"/><path d="M9.400 1.200h3.400c1 0 1.800 0.800 1.800 1.800v10c0 1-0.800 1.800-1.800 1.800H9.400z" fill="#8f8f8f" stroke="#777" stroke-width="0.800"/><path d="M7.700 0.500v15" stroke="#444" stroke-width="1.200"/><path d="M5.400 10.500h2.300" stroke="#444" stroke-width="1"/></svg>
<span class="t " style="left:24.70px;top:718.90px;font-size:12px;color:#2a2a2a;letter-spacing:0.281px;">Mirror 4</span>
<svg style="left:5px;top:745.25px" width="16" height="16" viewBox="0 0 16 16"><path d="M2 1.500h9v10H2z" fill="#d6d6d6" stroke="#aaa" stroke-width="0.800"/><path d="M2 3.500h9" stroke="#999" stroke-width="1"/><circle cx="10.600" cy="11" r="3.900" fill="#222"/><path d="M9 9.400l3.200 3.200M12.200 9.400l-3.200 3.200" stroke="#fff" stroke-width="1.300"/></svg>
<span class="t " style="left:24.70px;top:743.19px;font-size:12px;color:#2a2a2a;letter-spacing:0.133px;">Delete part 3</span>
<svg style="left:5px;top:771.54px" width="9" height="12" viewBox="0 0 9 12"><path d="M1.800 1.200l4.800 4.800l-4.800 4.800" fill="none" stroke="#3a3a3a" stroke-width="1.700"/></svg>
<span class="t " style="left:22.00px;top:767.48px;font-size:12px;color:#2a2a2a;letter-spacing:-0.077px;">Overlap (6)</span>
<div class="abs" style="left:9px;top:158px;width:1px;height:96px;background:#c8c8c8;"></div>
<div class="abs" style="left:4px;top:254px;width:11px;height:1px;background:#c8c8c8;"></div>
<svg style="left:3px;top:805.50px" width="13" height="9" viewBox="0 0 13 9"><path d="M1.400 1.700l5.100 5l5.100-5" fill="none" stroke="#2e2e2e" stroke-width="1.800"/></svg>
<span class="t " style="left:21.70px;top:799.94px;font-size:12px;color:#2a2a2a;letter-spacing:0.061px;">Parts (9)</span>
<span class="t " style="left:21.70px;top:824.23px;font-size:12px;color:#2a2a2a;letter-spacing:-0.084px;">Body</span>
<span class="t " style="left:21.70px;top:848.52px;font-size:12px;color:#2a2a2a;letter-spacing:0.417px;">Tank</span>
<span class="t " style="left:21.70px;top:872.81px;font-size:12px;color:#2a2a2a;letter-spacing:0.676px;">Top</span>
<span class="t " style="left:21.70px;top:897.10px;font-size:12px;color:#2a2a2a;letter-spacing:0.036px;">Wick</span>
<span class="t " style="left:21.70px;top:921.39px;font-size:12px;color:#2a2a2a;letter-spacing:-0.063px;">Part 1</span>
<span class="t " style="left:21.70px;top:945.68px;font-size:12px;color:#2a2a2a;letter-spacing:0.097px;">Part 2</span>
<span class="t " style="left:21.70px;top:969.97px;font-size:12px;color:#2a2a2a;letter-spacing:0.235px;">Cowling</span>
<span class="t " style="left:21.70px;top:994.26px;font-size:12px;color:#2a2a2a;letter-spacing:0.097px;">Part 8</span>
<span class="t " style="left:21.70px;top:1018.55px;font-size:12px;color:#2a2a2a;letter-spacing:0.248px;">Tray</span>
<svg style="left:5px;top:1046.90px" width="9" height="12" viewBox="0 0 9 12"><path d="M1.800 1.200l4.800 4.800l-4.800 4.800" fill="none" stroke="#3a3a3a" stroke-width="1.700"/></svg>
<span class="t " style="left:21.70px;top:1042.84px;font-size:12px;color:#2a2a2a;letter-spacing:0.031px;">Surfaces (3)</span>
<div class="abs" style="left:9px;top:823px;width:1px;height:218px;background:#c8c8c8;"></div>
<div class="abs" style="left:4px;top:1040px;width:11px;height:1px;background:#c8c8c8;"></div>
<div class="abs" style="left:192px;top:607px;width:30px;height:31px;box-sizing:border-box;border:1px solid #dcdcdc;border-left:none;background:#fff;"></div>
<svg style="left:197px;top:612px" width="20" height="20" viewBox="0 0 20 20"><g fill="none" stroke="#111"><path d="M1.300 2.500l2.900 2.600l2.900-2.600" stroke-width="1.400"/><path d="M9 3.500h9M6 17.500h12" stroke-width="1.400"/><path d="M6 8h12M6 12.700h12" stroke="#555" stroke-width="1.100"/><path d="M4.200 7v12" stroke="#444" stroke-width="1.200" stroke-dasharray="1.500 0.700"/></g></svg>
<div class="abs" style="left:1578.500px;top:576px;width:22px;height:93px;box-sizing:border-box;border:1px solid #dcdcdc;border-right:none;background:#fff;"></div>
<div class="abs" style="left:1579px;top:607px;width:21px;height:1px;background:#e0e0e0;"></div>
<div class="abs" style="left:1579px;top:638px;width:21px;height:1px;background:#e0e0e0;"></div>
<svg style="left:1584px;top:582px" width="16" height="20" viewBox="0 0 16 20"><circle cx="12.500" cy="13.500" r="4.500" fill="#fff" stroke="#888" stroke-width="0.800"/><circle cx="10.300" cy="6.300" r="4.800" fill="#9a9a9a" stroke="#666" stroke-width="0.800"/><circle cx="6.400" cy="13" r="4.800" fill="#1b55b3" stroke="#123a80" stroke-width="0.800"/></svg>
<svg style="left:1584px;top:612px" width="16" height="20" viewBox="0 0 16 20"><g fill="none" stroke="#333" stroke-width="0.900"><path d="M5 9v6.500l6.500 3l4.500-2.500M5 9l6.500 3v6.500M11.500 12l4.500-2.500M9 4.500l7 3"/></g><g stroke="#2a5cb8" stroke-width="1.100" fill="none"><rect x="1.500" y="1.500" width="8.500" height="6.500"/><path d="M1.500 3.700h8.500M1.500 5.900h8.500M4.300 1.500v6.500M7.200 1.500v6.500"/></g></svg>
<svg style="left:1584px;top:643px" width="16" height="20" viewBox="0 0 16 20"><g fill="none" stroke="#333" stroke-width="0.900"><path d="M5 9v6.500l6.500 3l4.500-2.500M5 9l6.500 3v6.500M11.500 12l4.500-2.500M9 4.500l7 3"/></g><g stroke="#222" stroke-width="1.100" fill="none"><rect x="1.500" y="1.500" width="8.500" height="6.500"/><path d="M1.500 3.700h8.500M1.500 5.900h8.500M4.300 1.500v6.500M7.200 1.500v6.500"/></g></svg>
<svg style="left:1548px;top:1169px" width="18" height="13" viewBox="0 0 18 13"><g fill="none" stroke="#222" stroke-width="0.900"><ellipse cx="11" cy="4" rx="5.500" ry="2.600"/><path d="M5.500 4v4.500c0 1.500 2.500 2.600 5.500 2.600s5.500-1.100 5.500-2.600V4"/><ellipse cx="11" cy="4" rx="2" ry="0.900"/><path d="M5.500 8.500H1v3h9"/><path d="M2.500 9.500v2M4 9.500v2"/></g></svg>
<svg style="left:1582px;top:1169px" width="16" height="14" viewBox="0 0 16 14"><g fill="none" stroke="#222" stroke-width="1"><path d="M8 1v10.500M4 12.500h8M2.500 2.500h11"/><path d="M0.800 8l1.700-5.500l1.700 5.500zM11.800 8l1.700-5.500l1.700 5.500z" stroke-width="0.800"/><path d="M0.500 8.300h4M11.500 8.300h4" stroke-width="1.300"/></g></svg>
<div id="tabs"></div>
<svg style="left:0;top:1206px" width="12" height="12" viewBox="0 0 12 12"><path d="M0 1.500V12H10.500C4.500 11 1 7.500 0 1.500Z" fill="#111"/></svg>
<svg style="left:7px;top:1195px" width="18" height="16" viewBox="0 0 18 16"><g fill="none" stroke="#555" stroke-width="1.500"><path d="M0.800 1.200h15.800M12.200 5.600h4.400M13 9.500h3.600"/><circle cx="6.200" cy="8.600" r="3.900"/><path d="M9 11.600l3.600 3.400"/></g></svg>
<svg style="left:42px;top:1195px" width="16" height="16" viewBox="0 0 16 16"><path d="M8 0.800v14.400M0.800 8h14.400" stroke="#ababab" stroke-width="2"/></svg>
<div class="tab act" style="left:71px;width:70.5px;"></div>
<svg style="left:82px;top:1193.500px" width="17" height="17" viewBox="0 0 17 17"><g fill="#f4f4f4" stroke="#333" stroke-width="0.900" stroke-linejoin="round"><path d="M7.500 2.800l2.200-2h5.400l0 12.800l-2.200 2.400h-5.400z"/><path d="M12.900 3v13M7.500 2.800l5.400 0.200l2.200-2.200" fill="none"/><path d="M0.800 6.600c0-1 1.400-1.700 3.200-1.700s3.200 0.700 3.200 1.700v7.800c0 1-1.400 1.700-3.200 1.700s-3.200-0.700-3.200-1.700z"/><path d="M0.800 6.600c0 1 1.400 1.700 3.200 1.700s3.200-0.700 3.200-1.700" fill="none"/></g></svg>
<span class="t " style="left:102.00px;top:1192.70px;font-size:12.4px;color:#222;letter-spacing:0.333px;">Hyku</span>
<div class="tab" style="left:143px;width:65.4px;"></div>
<svg style="left:153.7px;top:1193.500px" width="17" height="17" viewBox="0 0 17 17"><g fill="#f4f4f4" stroke="#333" stroke-width="0.900" stroke-linejoin="round"><path d="M7.500 2.800l2.200-2h5.400l0 12.800l-2.200 2.400h-5.400z"/><path d="M12.900 3v13M7.500 2.800l5.400 0.200l2.200-2.200" fill="none"/><path d="M0.800 6.600c0-1 1.400-1.700 3.200-1.700s3.200 0.700 3.200 1.700v7.800c0 1-1.400 1.700-3.200 1.700s-3.200-0.700-3.200-1.700z"/><path d="M0.800 6.600c0 1 1.400 1.700 3.200 1.700s3.200-0.700 3.200-1.700" fill="none"/></g></svg>
<span class="t " style="left:173.75px;top:1192.70px;font-size:12.4px;color:#555;letter-spacing:-0.168px;">Coin</span>
<div class="tab" style="left:210.5px;width:157.0px;"></div>
<svg style="left:220.5px;top:1194px" width="18" height="16" viewBox="0 0 18 16"><rect x="0.700" y="0.700" width="16" height="14.200" fill="#fff" stroke="#222" stroke-width="1.200"/><path d="M10 14.900v-4.300h6.700" fill="none" stroke="#222" stroke-width="1.200"/></svg>
<span class="t " style="left:241.25px;top:1192.70px;font-size:12.4px;color:#555;letter-spacing:0.238px;">Hyku - Wick 200302</span>
<div class="tab" style="left:369.5px;width:128.0px;"></div>
<svg style="left:380px;top:1193.500px" width="17" height="17" viewBox="0 0 17 17"><g fill="#f4f4f4" stroke="#333" stroke-width="0.900" stroke-linejoin="round"><path d="M7.500 2.800l2.200-2h5.400l0 12.800l-2.200 2.400h-5.400z"/><path d="M12.900 3v13M7.500 2.800l5.400 0.200l2.200-2.200" fill="none"/><path d="M0.800 6.600c0-1 1.400-1.700 3.200-1.700s3.200 0.700 3.200 1.700v7.800c0 1-1.400 1.700-3.200 1.700s-3.200-0.700-3.200-1.700z"/><path d="M0.800 6.600c0 1 1.400 1.700 3.200 1.700s3.200-0.700 3.200-1.700" fill="none"/></g></svg>
<span class="t " style="left:399.00px;top:1192.70px;font-size:12.4px;color:#555;letter-spacing:0.483px;">Tank Assembly</span>
<div class="tab" style="left:500px;width:121.5px;"></div>
<svg style="left:510px;top:1193.500px" width="17" height="17" viewBox="0 0 17 17"><g fill="#f4f4f4" stroke="#333" stroke-width="0.900" stroke-linejoin="round"><path d="M7.500 2.800l2.200-2h5.400l0 12.800l-2.200 2.400h-5.400z"/><path d="M12.900 3v13M7.500 2.800l5.400 0.200l2.200-2.200" fill="none"/><path d="M0.800 6.600c0-1 1.400-1.700 3.200-1.700s3.200 0.700 3.200 1.700v7.800c0 1-1.400 1.700-3.200 1.700s-3.200-0.700-3.200-1.700z"/><path d="M0.800 6.600c0 1 1.400 1.700 3.200 1.700s3.200-0.700 3.200-1.700" fill="none"/></g></svg>
<span class="t " style="left:530.00px;top:1192.70px;font-size:12.4px;color:#555;letter-spacing:0.500px;">Top Assembly</span>
<div class="tab" style="left:624px;width:124.5px;"></div>
<svg style="left:634px;top:1193.500px" width="17" height="17" viewBox="0 0 17 17"><g stroke="#222" stroke-width="0.900" stroke-linejoin="round"><path d="M1 3l3-2.300h10.500l1.500 1.500v10.300l-3 3H2.500L1 14z" fill="#f0f0f0"/><path d="M4 4.200h9.500v9.300H4z" fill="#777"/><path d="M4 4.200l2.500-2h9.300M13.500 4.200l2.300-2M13.500 13.500l2.300-1.300" fill="none"/></g></svg>
<span class="t " style="left:654.00px;top:1192.70px;font-size:12.4px;color:#555;letter-spacing:0.307px;">Hyku Full ASM</span>
<div class="tab" style="left:751.5px;width:117.5px;"></div>
<svg style="left:761px;top:1193.500px" width="17" height="17" viewBox="0 0 17 17"><g fill="#f4f4f4" stroke="#333" stroke-width="0.900" stroke-linejoin="round"><path d="M7.500 2.800l2.200-2h5.400l0 12.800l-2.200 2.400h-5.400z"/><path d="M12.900 3v13M7.500 2.800l5.400 0.200l2.200-2.200" fill="none"/><path d="M0.800 6.600c0-1 1.400-1.700 3.200-1.700s3.200 0.700 3.200 1.700v7.800c0 1-1.400 1.700-3.200 1.700s-3.200-0.700-3.200-1.700z"/><path d="M0.800 6.600c0 1 1.400 1.700 3.200 1.700s3.200-0.700 3.200-1.700" fill="none"/></g></svg>
<span class="t " style="left:781.00px;top:1192.70px;font-size:12.4px;color:#555;letter-spacing:0.179px;">new_tank_KC</span>
<div class="tab" style="left:872.5px;width:184.0px;"></div>
<svg style="left:881.5px;top:1194px" width="18" height="16" viewBox="0 0 18 16"><rect x="0.700" y="0.700" width="16" height="14.200" fill="#fff" stroke="#222" stroke-width="1.200"/><path d="M10 14.900v-4.300h6.700" fill="none" stroke="#222" stroke-width="1.200"/></svg>
<span class="t " style="left:902.50px;top:1192.70px;font-size:12.4px;color:#555;letter-spacing:0.246px;">Hyku Full ASM Drawing 1</span>
<div class="tab" style="left:1060px;width:133.5px;"></div>
<svg style="left:1070px;top:1193.500px" width="17" height="17" viewBox="0 0 17 17"><g fill="#f4f4f4" stroke="#333" stroke-width="0.900" stroke-linejoin="round"><path d="M7.500 2.800l2.200-2h5.400l0 12.800l-2.200 2.400h-5.400z"/><path d="M12.900 3v13M7.500 2.800l5.400 0.200l2.200-2.200" fill="none"/><path d="M0.800 6.600c0-1 1.400-1.700 3.200-1.700s3.200 0.700 3.200 1.700v7.800c0 1-1.400 1.700-3.200 1.700s-3.200-0.700-3.200-1.700z"/><path d="M0.800 6.600c0 1 1.400 1.700 3.200 1.700s3.200-0.700 3.200-1.700" fill="none"/></g></svg>
<span class="t " style="left:1090.00px;top:1192.70px;font-size:12.4px;color:#555;letter-spacing:0.157px;">Wire holder - KC</span>
<div class="tab" style="left:1196.5px;width:113.5px;"></div>
<svg style="left:1206.5px;top:1193.500px" width="17" height="17" viewBox="0 0 17 17"><g fill="#f4f4f4" stroke="#333" stroke-width="0.900" stroke-linejoin="round"><path d="M7.500 2.800l2.200-2h5.400l0 12.800l-2.200 2.400h-5.400z"/><path d="M12.900 3v13M7.500 2.800l5.400 0.200l2.200-2.200" fill="none"/><path d="M0.800 6.600c0-1 1.400-1.700 3.200-1.700s3.200 0.700 3.200 1.700v7.800c0 1-1.400 1.700-3.200 1.700s-3.200-0.700-3.200-1.700z"/><path d="M0.800 6.600c0 1 1.400 1.700 3.200 1.700s3.200-0.700 3.200-1.700" fill="none"/></g></svg>
<span class="t " style="left:1226.50px;top:1192.70px;font-size:12.4px;color:#555;letter-spacing:-0.145px;">UV PCB ASM</span>
<div class="tab" style="left:1313.5px;width:126.5px;"></div>
<svg style="left:1322.5px;top:1193.500px" width="17" height="17" viewBox="0 0 17 17"><g stroke="#222" stroke-width="0.900" stroke-linejoin="round"><path d="M1 3l3-2.300h10.500l1.500 1.500v10.300l-3 3H2.500L1 14z" fill="#f0f0f0"/><path d="M4 4.200h9.500v9.300H4z" fill="#777"/><path d="M4 4.200l2.500-2h9.300M13.500 4.200l2.300-2M13.500 13.500l2.300-1.300" fill="none"/></g></svg>
<span class="t " style="left:1343.50px;top:1192.70px;font-size:12.4px;color:#555;letter-spacing:-0.332px;">UV and POWER</span>
<div class="tab" style="left:1443.5px;width:156.5px;"></div>
<svg style="left:1453.5px;top:1194px" width="18" height="16" viewBox="0 0 18 16"><rect x="0.700" y="0.700" width="16" height="14.200" fill="#fff" stroke="#222" stroke-width="1.200"/><path d="M10 14.900v-4.300h6.700" fill="none" stroke="#222" stroke-width="1.200"/></svg>
<span class="t " style="left:1474.00px;top:1192.70px;font-size:12.4px;color:#555;letter-spacing:0.000px;">Top Assembly Drawing</span>
<div class="abs" style="left:1563px;top:1189px;width:37px;height:29px;background:#d2d2d2;"></div>
<svg style="left:1569px;top:1196px" width="10" height="14" viewBox="0 0 10 14"><path d="M7.500 1.500l-5 5.500l5 5.500" fill="none" stroke="#a8a8a8" stroke-width="1.800"/></svg>
<svg style="left:1589px;top:1196px" width="10" height="14" viewBox="0 0 10 14"><path d="M2.500 1.500l5 5.500l-5 5.500" fill="none" stroke="#444" stroke-width="1.800"/></svg>
<svg style="left:1440px;top:70px" width="160" height="170" viewBox="1440 70 160 170">
<g fill="#dfe5ec"><path d="M1518.500 94.500h11l-5.500-8z"/><path d="M1518.500 216h11l-5.500 8z"/><path d="M1463.500 149.500v11l-8.500-5.500z"/><path d="M1585.500 149.500v11l8.500-5.500z"/></g>
<g fill="none" stroke="#dfe5ec" stroke-width="5"><path d="M1504 96.500C1492 99.500 1483 105 1478 111"/><path d="M1545 96.500C1557 99.500 1566 105 1571 111"/></g>
<g fill="#dfe5ec"><path d="M1472.500 104.500l9.500 8.500l-8.500 3.500z"/><path d="M1576.500 104.500l-9.500 8.500l8.500 3.500z"/></g>
<path d="M1518 116C1521 115 1523 115 1526 116L1556 127C1559.500 128.500 1561 130.500 1561 134L1559 170C1558.800 173.500 1557.500 175.500 1555 177.500L1540 191.500C1537 194 1534 194.500 1530 193.500L1494 184.500C1490.500 183.500 1489 181.500 1489 178L1488.500 140C1488.500 136.500 1490 134.500 1492.500 132.500L1512 119C1514 117.500 1516 116.500 1518 116Z" fill="#d9e1ea"/>
<path d="M1502 130.500L1518.500 120.500Q1520.500 119.500 1523 120.300L1545.500 128Q1549 129.500 1546 131.500L1533 140Q1530.500 141.500 1527.500 140.500L1503.500 133.500Q1500 132.300 1502 130.500Z" fill="#fff"/>
<path d="M1495.500 150.500L1523 159Q1526.500 160.200 1526.300 163.500L1525 187Q1524.800 190.500 1521.500 189.500L1495 182Q1492 181 1492 178L1492.300 153Q1492.500 149.600 1495.500 150.500Z" fill="#fff"/>
<path d="M1541 154.500L1553.500 141Q1556 138.500 1556 142L1555.300 167.500Q1555.200 170.500 1553 172.500L1542 184.500Q1539.600 187 1539.600 183.500L1539.600 158Q1539.600 156 1541 154.500Z" fill="#fff"/>
<circle cx="1532" cy="149.500" r="5.200" fill="#fff"/><circle cx="1493.500" cy="140" r="3.600" fill="#fff"/><circle cx="1554.500" cy="131" r="2.600" fill="#fff"/><circle cx="1532" cy="190" r="3.200" fill="#fff"/>
<path d="M1515 137V153M1535.500 165.500H1541" stroke="#fff" stroke-width="1.200"/>
<path d="M1485.400 184.800L1515 158.500" stroke="#a9dba9" stroke-width="1"/>
<path d="M1485.400 137V184.800" stroke="#2020d0" stroke-width="1.300"/>
<path d="M1485.400 184.800L1532 198.700" stroke="#d42a2a" stroke-width="1.300"/>
<text x="1481.800" y="134" font-family="Liberation Sans,sans-serif" font-weight="bold" font-size="11.500" fill="#2020c8">Z</text>
<text x="1537.500" y="206.300" font-family="Liberation Sans,sans-serif" font-weight="bold" font-size="11.500" fill="#d42a2a">X</text>
<text x="1514" y="161" font-family="Liberation Sans,sans-serif" font-size="9" fill="#a9dba9">Y</text>
<text transform="translate(1517 128.500) rotate(21) skewX(-25)" font-family="Liberation Sans,sans-serif" font-size="7.600" fill="#333">Top</text>
<text transform="translate(1497.500 167) rotate(15) skewX(8)" font-family="Liberation Sans,sans-serif" font-size="9.600" font-weight="bold" fill="#3a3a3a" stroke="#fff" stroke-width="0.250">Front</text>
<text transform="translate(1543.500 171.500) rotate(-42) skewX(-12)" font-family="Liberation Sans,sans-serif" font-size="7.600" fill="#333">Right</text>
<defs><linearGradient id="cubL" x1="0" y1="0" x2="1" y2="0"><stop offset="0" stop-color="#8d8d8d"/><stop offset="1" stop-color="#b9b9b9"/></linearGradient></defs>
<path d="M1558 212.500L1567 208L1575.500 211V220.500L1566.500 224.500L1558 221Z" fill="#e9e9e9" stroke="#8a8a8a" stroke-width="0.800" stroke-linejoin="round"/>
<path d="M1558 212.500L1566.500 215.500V224.500L1558 221Z" fill="url(#cubL)"/>
<path d="M1566.500 215.500L1575.500 211V220.500L1566.500 224.500Z" fill="#cfcfcf"/>
<path d="M1582.600 215h7.400l-3.700 4z" fill="#222"/>
</svg>
</body></html>
